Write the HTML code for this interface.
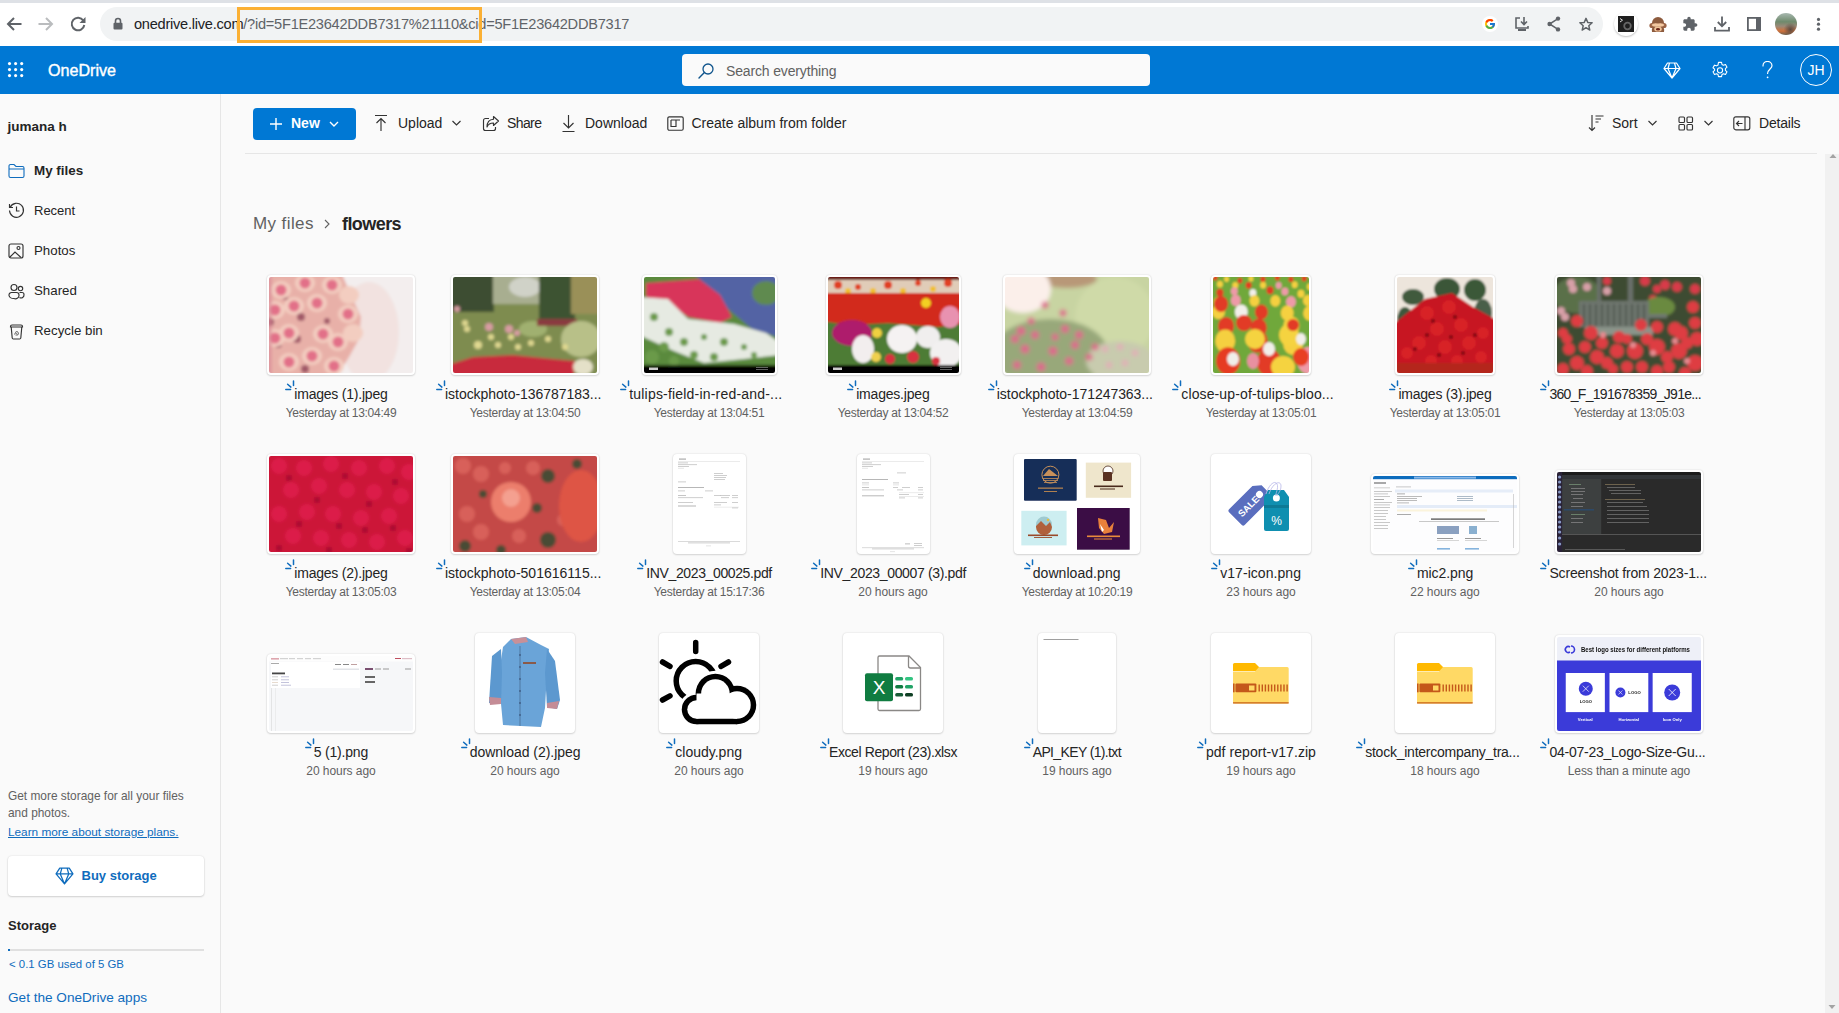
<!DOCTYPE html>
<html><head><meta charset="utf-8"><title>OneDrive</title>
<style>
*{box-sizing:border-box;margin:0;padding:0}
html,body{width:1839px;height:1013px;overflow:hidden;background:#fafafa;font-family:"Liberation Sans",sans-serif;color:#242424}
.a{position:absolute}
svg{display:block}
#chrome{left:0;top:0;width:1839px;height:46px;background:#fff}
#tabstrip{left:0;top:0;width:1839px;height:3px;background:#dee1e6}
#pill{left:100px;top:7px;width:1503px;height:34px;border-radius:17px;background:#f1f3f4}
#url{left:134px;top:15px;font-size:14.6px;letter-spacing:-0.25px;line-height:19px;color:#5f6368;white-space:nowrap}
#url b{font-weight:400;color:#202124}
#hl{left:237px;top:7px;width:245px;height:36px;border:3px solid #fbb034}
#hdr{left:0;top:46px;width:1839px;height:48px;background:#0078d4}
#brand{left:48px;top:60px;font-size:16.1px;font-weight:400;-webkit-text-stroke:0.4px #fff;color:#fff;line-height:20px}
#search{left:682px;top:54px;width:468px;height:32px;border-radius:4px;background:#fafafa}
#stext{left:726px;top:63px;font-size:14px;letter-spacing:-0.15px;line-height:17px;color:#616161}
#jh{left:1800px;top:54px;width:32px;height:32px;border-radius:50%;border:1px solid #fff;color:#fff;font-size:14px;line-height:30px;text-align:center}
#side{left:0;top:94px;width:221px;height:919px;background:#fafafa;border-right:1px solid #e6e6e6}
.nav{left:34px;font-size:13.4px;line-height:16px;color:#242424}
.navi{left:8px}
.tb{top:115px;font-size:14px;line-height:17px;color:#242424;white-space:nowrap}
#newbtn{left:253px;top:108px;width:103px;height:32px;border-radius:4px;background:#0078d4}
#sep{left:245px;top:153px;width:1572px;height:1px;background:#e6e6e6}
#crumb1{left:253px;top:213px;font-size:17px;letter-spacing:0.4px;line-height:22px;color:#616161}
#crumb2{left:342px;top:213px;font-size:18px;letter-spacing:-0.57px;line-height:22px;font-weight:700;color:#242424}
#sb{left:1825px;top:154px;width:14px;height:859px;background:#f1f1f1}
.card{position:absolute;background:#fff;border-radius:4px;box-shadow:0 0 2px rgba(0,0,0,.14),0 1px 2px rgba(0,0,0,.12);padding:2px;overflow:hidden}
.card>div{border-radius:2px;overflow:hidden;position:relative}
.nm{position:absolute;width:300px;text-align:center;font-size:14px;line-height:17px;color:#242424;white-space:nowrap}
.nt{position:relative;display:inline-block}
.sy{position:absolute;left:-9px;top:-6px}
.dt{position:absolute;width:300px;text-align:center;font-size:12px;line-height:15px;color:#616161;white-space:nowrap}
</style></head><body>
<!-- CHROME -->
<div id="chrome" class="a"></div>
<div id="tabstrip" class="a"></div>
<svg class="a" style="left:5px;top:15px" width="18" height="18" viewBox="0 0 18 18"><path d="M16.5 9H3.5M9 3L3 9L9 15" stroke="#5f6368" stroke-width="2" fill="none"/></svg>
<svg class="a" style="left:37px;top:15px" width="18" height="18" viewBox="0 0 18 18"><path d="M1.5 9H14.5M9 3L15 9L9 15" stroke="#babcbe" stroke-width="2" fill="none"/></svg>
<svg class="a" style="left:69px;top:15px" width="18" height="18" viewBox="0 0 18 18"><path d="M14.3 5.5A6.3 6.3 0 1 0 15.3 10" stroke="#5f6368" stroke-width="2" fill="none"/><path d="M16.5 2V8H10.5Z" fill="#5f6368"/></svg>
<div id="pill" class="a"></div>
<svg class="a" style="left:113px;top:17px" width="10" height="13" viewBox="0 0 10 13"><path d="M2.5 6V4A2.5 2.5 0 0 1 7.5 4V6" stroke="#5f6368" stroke-width="1.6" fill="none"/><rect x="0.5" y="5.8" width="9" height="6.6" rx="1" fill="#5f6368"/></svg>
<div id="url" class="a"><b>onedrive.live.com</b>/?id=5F1E23642DDB7317%21110&amp;cid=5F1E23642DDB7317</div>
<div id="hl" class="a"></div>
<!-- chrome right icons -->
<div class="a" style="left:1482px;top:16px;width:16px;height:16px;border-radius:50%;background:#fff"></div>
<svg class="a" style="left:1484px;top:18px" width="12" height="12" viewBox="0 0 48 48"><path d="M43.6 20.1H42V20H24v8h11.3C33.7 32.7 29.2 36 24 36c-6.6 0-12-5.4-12-12s5.4-12 12-12c3.1 0 5.8 1.2 7.9 3.1l5.7-5.7C34 6.1 29.3 4 24 4 13 4 4 13 4 24s9 20 20 20 20-9 20-20c0-1.3-.1-2.6-.4-3.9z" fill="#FFC107"/><path d="M6.3 14.7l6.6 4.8C14.7 15.1 19 12 24 12c3.1 0 5.8 1.2 7.9 3.1l5.7-5.7C34 6.1 29.3 4 24 4 16.3 4 9.7 8.3 6.3 14.7z" fill="#FF3D00"/><path d="M24 44c5.2 0 9.9-2 13.4-5.2l-6.2-5.2C29.2 35.1 26.7 36 24 36c-5.2 0-9.6-3.3-11.3-7.9l-6.5 5C9.5 39.6 16.2 44 24 44z" fill="#4CAF50"/><path d="M43.6 20.1H42V20H24v8h11.3c-.8 2.2-2.2 4.2-4.1 5.6l6.2 5.2C37 39.2 44 34 44 24c0-1.3-.1-2.6-.4-3.9z" fill="#1976D2"/></svg>
<svg class="a" style="left:1514px;top:16px" width="16" height="16" viewBox="0 0 16 16"><path d="M6 2H2V12H14V10" stroke="#5f6368" stroke-width="1.6" fill="none"/><path d="M10 1V8M7 5.5L10 8.5L13 5.5" stroke="#5f6368" stroke-width="1.6" fill="none"/><rect x="4" y="13" width="8" height="2" fill="#5f6368"/></svg>
<svg class="a" style="left:1547px;top:16px" width="14" height="16" viewBox="0 0 14 16"><circle cx="11" cy="2.6" r="2.2" fill="#5f6368"/><circle cx="2.6" cy="8" r="2.2" fill="#5f6368"/><circle cx="11" cy="13.4" r="2.2" fill="#5f6368"/><path d="M11 2.6L2.6 8L11 13.4" stroke="#5f6368" stroke-width="1.5" fill="none"/></svg>
<svg class="a" style="left:1578px;top:16px" width="16" height="16" viewBox="0 0 24 24"><path d="M12 3.5l2.6 6.1 6.6.6-5 4.4 1.5 6.5L12 17.6l-5.7 3.5 1.5-6.5-5-4.4 6.6-.6z" stroke="#5f6368" stroke-width="2.2" fill="none" stroke-linejoin="round"/></svg>
<div class="a" style="left:1614px;top:12px;width:24px;height:24px;border-radius:50%;background:#fff;box-shadow:0 1px 2px rgba(0,0,0,.25)"></div>
<div class="a" style="left:1618px;top:16px;width:16px;height:16px;background:#1f1f1f"></div>
<svg class="a" style="left:1618px;top:16px" width="16" height="16" viewBox="0 0 16 16"><path d="M2 2.5L4.5 4.2L2 6" stroke="#ddd" stroke-width="1" fill="none"/><circle cx="9.5" cy="10" r="3.3" stroke="#666" stroke-width="1.8" fill="none"/></svg>
<svg class="a" style="left:1649px;top:16px" width="18" height="17" viewBox="0 0 18 17"><ellipse cx="9" cy="7" rx="6" ry="6" fill="#8d5b3e"/><ellipse cx="3" cy="9.5" rx="2.6" ry="2.6" fill="#9a6244"/><ellipse cx="15" cy="9.5" rx="2.6" ry="2.6" fill="#9a6244"/><path d="M3 16 Q2 11 6 10 H12 Q16 11 15 16Z" fill="#8d5b3e"/><path d="M2.5 9 Q4 6.5 9 7.5 Q14 6.5 15.5 9 Q14 11.5 9 10.5 Q4 11.5 2.5 9Z" fill="#f2c7a0"/><ellipse cx="9" cy="13" rx="3.8" ry="2.6" fill="#f0c49a"/><ellipse cx="9" cy="13.3" rx="2" ry="1.3" fill="#6a2418"/></svg>
<svg class="a" style="left:1682px;top:16px" width="16" height="16" viewBox="0 0 24 24"><path d="M20.5 11H19V7c0-1.1-.9-2-2-2h-4V3.5C13 2.1 11.9 1 10.5 1S8 2.1 8 3.5V5H4c-1.1 0-2 .9-2 2v3.8h1.5c1.5 0 2.7 1.2 2.7 2.7S5 16.2 3.5 16.2H2V20c0 1.1.9 2 2 2h3.8v-1.5c0-1.5 1.2-2.7 2.7-2.7s2.7 1.2 2.7 2.7V22H17c1.1 0 2-.9 2-2v-4h1.5c1.4 0 2.5-1.1 2.5-2.5S21.9 11 20.5 11z" fill="#5f6368"/></svg>
<svg class="a" style="left:1714px;top:16px" width="16" height="16" viewBox="0 0 16 16"><path d="M8 0.5V10M3.8 6L8 10.2L12.2 6" stroke="#5f6368" stroke-width="1.8" fill="none"/><path d="M1 11V14.6H15V11" stroke="#5f6368" stroke-width="1.8" fill="none"/></svg>
<svg class="a" style="left:1746px;top:16px" width="16" height="16" viewBox="0 0 16 16"><rect x="1.9" y="1.9" width="12.2" height="12.2" stroke="#5f6368" stroke-width="1.8" fill="none"/><rect x="10" y="1.5" width="4.5" height="13" fill="#5f6368"/></svg>
<div class="a" style="left:1775px;top:13px;width:22px;height:22px;border-radius:50%;background:radial-gradient(circle at 70% 75%,#5a4a40 0,transparent 30%),linear-gradient(180deg,#a8b8b0 0%,#6f8a6c 40%,#9a8a78 60%,#d0703a 82%,#6a6050 100%)"></div>
<svg class="a" style="left:1815px;top:17px" width="7" height="15" viewBox="0 0 7 15"><circle cx="3.5" cy="2.4" r="1.6" fill="#5f6368"/><circle cx="3.5" cy="7.2" r="1.6" fill="#5f6368"/><circle cx="3.5" cy="12.2" r="1.6" fill="#5f6368"/></svg>

<!-- HEADER -->
<div id="hdr" class="a"></div>
<svg class="a" style="left:0;top:0" width="30" height="90" viewBox="0 0 30 90" fill="#fff"><circle cx="9.5" cy="63.6" r="1.55"/><circle cx="15.6" cy="63.6" r="1.55"/><circle cx="21.7" cy="63.6" r="1.55"/><circle cx="9.5" cy="69.6" r="1.55"/><circle cx="15.6" cy="69.6" r="1.55"/><circle cx="21.7" cy="69.6" r="1.55"/><circle cx="9.5" cy="75.6" r="1.55"/><circle cx="15.6" cy="75.6" r="1.55"/><circle cx="21.7" cy="75.6" r="1.55"/></svg>
<div id="brand" class="a">OneDrive</div>
<div id="search" class="a"></div>
<svg class="a" style="left:697px;top:62px" width="18" height="18" viewBox="0 0 18 18"><circle cx="11" cy="7" r="5" stroke="#0f548c" stroke-width="1.3" fill="none"/><path d="M7.4 10.6L2 16" stroke="#0f548c" stroke-width="1.4" stroke-linecap="round"/></svg>
<div id="stext" class="a">Search everything</div>
<svg class="a" style="left:1663px;top:62px" width="18" height="17" viewBox="0 0 18 17"><path d="M4.5 1H13.5L17 6.5L9 16L1 6.5Z M1 6.5H17 M6.5 1L5 6.5L9 16L13 6.5L11.5 1" stroke="#fff" stroke-width="1.2" fill="none" stroke-linejoin="round"/></svg>
<svg class="a" style="left:1711px;top:61px" width="18" height="18" viewBox="0 0 20 20"><path d="M8.3 1.5h3.4l.5 2.4 1.6.9 2.3-.8 1.7 2.9-1.8 1.6v1.9l1.8 1.6-1.7 2.9-2.3-.8-1.6.9-.5 2.4H8.3l-.5-2.4-1.6-.9-2.3.8-1.7-2.9 1.8-1.6V9.1L2.2 7.5l1.7-2.9 2.3.8 1.6-.9z" stroke="#fff" stroke-width="1.2" fill="none" stroke-linejoin="round"/><circle cx="10" cy="10.4" r="2.9" stroke="#fff" stroke-width="1.2" fill="none"/></svg>
<svg class="a" style="left:1761px;top:61px" width="13" height="18" viewBox="0 0 13 18"><path d="M2 5A4.5 4.5 0 0 1 11 4.8C11 7.8 6.6 8.5 6.6 12.5" stroke="#fff" stroke-width="1.2" fill="none" stroke-linecap="round"/><circle cx="6.6" cy="16.3" r="0.9" fill="#fff"/></svg>
<div id="jh" class="a">JH</div>

<!-- SIDEBAR -->
<div id="side" class="a"></div>
<div class="a" style="left:7.5px;top:119px;font-size:13.5px;font-weight:700;line-height:16px">jumana h</div>
<svg class="a navi" style="top:163px" width="17" height="16" viewBox="0 0 17 16"><path d="M1 3A1.5 1.5 0 0 1 2.5 1.5H6L8 3.5H14.5A1.5 1.5 0 0 1 16 5V13A1.5 1.5 0 0 1 14.5 14.5H2.5A1.5 1.5 0 0 1 1 13Z M1 6H16" stroke="#0f6cbd" stroke-width="1.1" fill="none"/></svg>
<div class="a nav" style="top:163px;font-weight:700;font-size:13.4px">My files</div>
<svg class="a navi" style="top:202px" width="17" height="17" viewBox="0 0 17 17"><path d="M2.2 5.2A7 7 0 1 1 1.5 8.5" stroke="#333" stroke-width="1.15" fill="none"/><path d="M1.5 2V5.5H5" stroke="#333" stroke-width="1.15" fill="none"/><path d="M8.5 4.5V9H11.5" stroke="#333" stroke-width="1.15" fill="none"/></svg>
<div class="a nav" style="top:203px;font-size:13px">Recent</div>
<svg class="a navi" style="top:243px" width="16" height="16" viewBox="0 0 16 16"><rect x="1" y="1" width="14" height="14" rx="2" stroke="#333" stroke-width="1.15" fill="none"/><path d="M1.5 14.5L7 9L13 14.5" stroke="#333" stroke-width="1.15" fill="none"/><circle cx="10.5" cy="5" r="1.5" stroke="#333" stroke-width="1.15" fill="none"/></svg>
<div class="a nav" style="top:243px;font-size:13.3px">Photos</div>
<svg class="a navi" style="top:283px" width="17" height="17" viewBox="0 0 17 17"><circle cx="6" cy="4.5" r="3" stroke="#333" stroke-width="1.15" fill="none"/><circle cx="12.5" cy="5.5" r="2.2" stroke="#333" stroke-width="1.15" fill="none"/><path d="M1 12A2.5 2.5 0 0 1 3.5 9.5H8.5A2.5 2.5 0 0 1 11 12V12.5A3.5 3.5 0 0 1 6 15.5A5 3.5 0 0 1 1 12.5Z M11.5 9.5H14A2 2 0 0 1 16 11.5A3 3 0 0 1 11.5 14.5" stroke="#333" stroke-width="1.15" fill="none"/></svg>
<div class="a nav" style="top:283px;font-size:13.3px">Shared</div>
<svg class="a navi" style="top:323px" width="17" height="17" viewBox="0 0 17 17"><path d="M2.5 3.5A1.5 1.5 0 0 1 4 2H13A1.5 1.5 0 0 1 14.5 3.5V4H2.5Z M3.2 4L4.2 15A1.2 1.2 0 0 0 5.4 16H11.6A1.2 1.2 0 0 0 12.8 15L13.8 4" stroke="#333" stroke-width="1.15" fill="none"/><path d="M6.5 11.5L7.5 9.5L8.8 11.2M10.5 10L9.8 12H7.5M7.8 8.7H9.6L10.3 10" stroke="#424242" stroke-width="0.8" fill="none"/></svg>
<div class="a nav" style="top:323px;font-size:13.3px">Recycle bin</div>

<div class="a" style="left:8px;top:788px;font-size:11.9px;line-height:17px;color:#616161;width:200px;white-space:nowrap">Get more storage for all your files<br>and photos.</div>
<div class="a" style="left:8px;top:824px;font-size:11.8px;line-height:16px;color:#0f6cbd;text-decoration:underline;white-space:nowrap">Learn more about storage plans.</div>
<div class="a" style="left:8px;top:856px;width:196px;height:40px;border-radius:4px;background:#fff;box-shadow:0 0 2px rgba(0,0,0,.12),0 1px 2px rgba(0,0,0,.14)"></div>
<svg class="a" style="left:55px;top:867px" width="19" height="18" viewBox="0 0 18 17"><path d="M4.5 1H13.5L17 6.5L9 16L1 6.5Z M1 6.5H17 M6.5 1L5 6.5L9 16L13 6.5L11.5 1" stroke="#0f6cbd" stroke-width="1.2" fill="none" stroke-linejoin="round"/></svg>
<div class="a" style="left:81.5px;top:868px;font-size:13px;font-weight:700;line-height:16px;color:#0f6cbd">Buy storage</div>
<div class="a" style="left:8px;top:918px;font-size:13px;font-weight:700;line-height:16px;color:#242424">Storage</div>
<div class="a" style="left:8px;top:949px;width:196px;height:2px;background:#e0e0e0"></div>
<div class="a" style="left:8px;top:949px;width:2px;height:2px;background:#0f6cbd"></div>
<div class="a" style="left:9px;top:957px;font-size:11.4px;line-height:14px;color:#0f6cbd;white-space:nowrap">&lt; 0.1 GB used of 5 GB</div>
<div class="a" style="left:8px;top:989px;font-size:13.6px;line-height:17px;color:#0f6cbd;white-space:nowrap">Get the OneDrive apps</div>

<!-- TOOLBAR -->
<div id="newbtn" class="a"></div>
<svg class="a" style="left:268px;top:116px" width="16" height="16" viewBox="0 0 16 16"><path d="M8 2V14M2 8H14" stroke="#fff" stroke-width="1.4"/></svg>
<div class="a tb" style="left:291px;color:#fff;font-weight:700">New</div>
<svg class="a" style="left:328px;top:119px" width="12" height="10" viewBox="0 0 12 10"><path d="M2 3L6 7L10 3" stroke="#fff" stroke-width="1.4" fill="none"/></svg>

<svg class="a" style="left:373px;top:114px" width="16" height="18" viewBox="0 0 16 18"><path d="M2 1.5H14M8 4.5V17M3.5 9L8 4.5L12.5 9" stroke="#333" stroke-width="1.15" fill="none"/></svg>
<div class="a tb" style="left:398px">Upload</div>
<svg class="a" style="left:451px;top:119px" width="11" height="8" viewBox="0 0 11 8"><path d="M1.5 2L5.5 6L9.5 2" stroke="#333" stroke-width="1.15" fill="none"/></svg>

<svg class="a" style="left:482px;top:115px" width="18" height="17" viewBox="0 0 18 17"><path d="M7 3.5H3.5A2 2 0 0 0 1.5 5.5V13.5A2 2 0 0 0 3.5 15.5H11.5A2 2 0 0 0 13.5 13.5V12" stroke="#333" stroke-width="1.15" fill="none"/><path d="M11.5 1.5L16.5 6L11.5 10.5V8C8 8 6 9.5 5 12C5 8 7 4.5 11.5 4.2Z" stroke="#333" stroke-width="1.15" fill="none" stroke-linejoin="round"/></svg>
<div class="a tb" style="left:507px;letter-spacing:-0.6px">Share</div>

<svg class="a" style="left:561px;top:114px" width="15" height="19" viewBox="0 0 15 19"><path d="M7.5 1V14M2.5 9L7.5 14L12.5 9M1.5 17.5H13.5" stroke="#333" stroke-width="1.15" fill="none"/></svg>
<div class="a tb" style="left:585px">Download</div>

<svg class="a" style="left:667px;top:116px" width="17" height="15" viewBox="0 0 17 15"><rect x="0.8" y="0.8" width="15.4" height="13.4" rx="1.5" stroke="#333" stroke-width="1.15" fill="none"/><path d="M4 4H13M4 4V10.5H9V4" stroke="#333" stroke-width="1.15" fill="none"/></svg>
<div class="a tb" style="left:691.5px">Create album from folder</div>

<svg class="a" style="left:1588px;top:114px" width="17" height="18" viewBox="0 0 17 18"><path d="M4 1V16.5M1 13.5L4 16.5L7 13.5M7.5 2H15.5M7.5 5H13M7.5 8H10.5" stroke="#333" stroke-width="1.15" fill="none"/></svg>
<div class="a tb" style="left:1612px">Sort</div>
<svg class="a" style="left:1647px;top:119px" width="11" height="8" viewBox="0 0 11 8"><path d="M1.5 2L5.5 6L9.5 2" stroke="#333" stroke-width="1.15" fill="none"/></svg>
<svg class="a" style="left:1678px;top:116px" width="16" height="15" viewBox="0 0 16 15"><rect x="1" y="1" width="5.5" height="5.5" rx="1" stroke="#333" stroke-width="1.15" fill="none"/><rect x="9" y="1" width="5.5" height="5.5" rx="1" stroke="#333" stroke-width="1.15" fill="none"/><rect x="1" y="8.5" width="5.5" height="5.5" rx="1" stroke="#333" stroke-width="1.15" fill="none"/><rect x="9" y="8.5" width="5.5" height="5.5" rx="1" stroke="#333" stroke-width="1.15" fill="none"/></svg>
<svg class="a" style="left:1703px;top:119px" width="11" height="8" viewBox="0 0 11 8"><path d="M1.5 2L5.5 6L9.5 2" stroke="#333" stroke-width="1.15" fill="none"/></svg>
<svg class="a" style="left:1733px;top:116px" width="18" height="15" viewBox="0 0 18 15"><rect x="0.8" y="0.8" width="16" height="13" rx="2" stroke="#333" stroke-width="1.15" fill="none"/><path d="M12 1V14M9.5 7.5H3.5M6 5L3.5 7.5L6 10" stroke="#333" stroke-width="1.15" fill="none"/></svg>
<div class="a tb" style="left:1759px;letter-spacing:-0.2px">Details</div>
<div id="sep" class="a"></div>

<div id="crumb1" class="a">My files</div>
<svg class="a" style="left:322px;top:217px" width="10" height="14" viewBox="0 0 10 14"><path d="M3 3L7 7L3 11" stroke="#616161" stroke-width="1.1" fill="none"/></svg>
<div id="crumb2" class="a">flowers</div>

<div class="card" style="left:267.0px;top:275px;width:148px;height:100px"><div style="position:absolute;left:2px;top:2px;width:144px;height:96px;overflow:hidden;border-radius:2px"><svg width="144" height="96" viewBox="0 0 144 96" style="position:absolute;left:0;top:0"><defs><filter id="b0" x="-10%" y="-10%" width="120%" height="120%"><feGaussianBlur stdDeviation="1.8"/></filter></defs><g filter="url(#b0)"><rect x="-5" y="-5" width="160" height="110" fill="#f3eeee"/><ellipse cx="100" cy="55" rx="30" ry="50" fill="#f2e2e0"/><path d="M-5 -5 H72 L82 18 L92 40 L90 62 L80 80 L70 96 L62 105 H-5Z" fill="#e8b0a8"/><circle cx="32" cy="40" r="4" fill="#a05868"/><circle cx="1" cy="45" r="4" fill="#a05868"/><circle cx="9" cy="67" r="4" fill="#a05868"/><circle cx="28" cy="62" r="4" fill="#a05868"/><circle cx="36" cy="92" r="4" fill="#a05868"/><circle cx="58" cy="44" r="3" fill="#a05868"/><circle cx="16" cy="20" r="3" fill="#a05868"/><ellipse cx="12" cy="13" rx="10" ry="9" fill="#f3cdc0"/><ellipse cx="36" cy="6" rx="10" ry="9" fill="#f3cdc0"/><ellipse cx="48" cy="26" rx="10" ry="9" fill="#f3cdc0"/><ellipse cx="25" cy="29" rx="10" ry="9" fill="#f3cdc0"/><ellipse cx="79" cy="37" rx="10" ry="9" fill="#f3cdc0"/><ellipse cx="6" cy="33" rx="10" ry="9" fill="#f3cdc0"/><ellipse cx="20" cy="56" rx="10" ry="9" fill="#f3cdc0"/><ellipse cx="54" cy="57" rx="10" ry="9" fill="#f3cdc0"/><ellipse cx="69" cy="65" rx="10" ry="9" fill="#f3cdc0"/><ellipse cx="6" cy="61" rx="10" ry="9" fill="#f3cdc0"/><ellipse cx="43" cy="79" rx="10" ry="9" fill="#f3cdc0"/><ellipse cx="65" cy="89" rx="10" ry="9" fill="#f3cdc0"/><ellipse cx="20" cy="85" rx="10" ry="9" fill="#f3cdc0"/><ellipse cx="63" cy="8" rx="10" ry="9" fill="#f3cdc0"/><ellipse cx="80" cy="18" rx="10" ry="9" fill="#f3cdc0"/><ellipse cx="84" cy="56" rx="10" ry="9" fill="#f3cdc0"/><circle cx="12" cy="13" r="5.5" fill="#e27088"/><circle cx="36" cy="6" r="5.5" fill="#e27088"/><circle cx="48" cy="26" r="5.5" fill="#e27088"/><circle cx="25" cy="29" r="5.5" fill="#e27088"/><circle cx="79" cy="37" r="5.5" fill="#e27088"/><circle cx="6" cy="33" r="5.5" fill="#e27088"/><circle cx="20" cy="56" r="5.5" fill="#e27088"/><circle cx="54" cy="57" r="5.5" fill="#e27088"/><circle cx="69" cy="65" r="5.5" fill="#e27088"/><circle cx="6" cy="61" r="5.5" fill="#e27088"/><circle cx="43" cy="79" r="5.5" fill="#e27088"/><circle cx="65" cy="89" r="5.5" fill="#e27088"/><circle cx="20" cy="85" r="5.5" fill="#e27088"/><circle cx="63" cy="8" r="5.5" fill="#e27088"/><rect x="-5" y="-5" width="8" height="110" fill="#d88898" opacity="0.6"/></g></svg></div></div>
<div class="nm" style="left:190.95000000000005px;top:386px;letter-spacing:-0.213px"><span class="nt" id="n0"><svg class="sy" width="12" height="12" viewBox="0 0 12 12"><path d="M0.8 9.5H5.6M2.6 4.3L5.9 7.1M8.5 1V5.6" stroke="#0f6cbd" stroke-width="1.5" fill="none" stroke-linecap="round"/></svg>images (1).jpeg</span></div>
<div class="dt" style="left:191px;top:406px;letter-spacing:-0.273px"><span id="d0">Yesterday at 13:04:49</span></div>
<div class="card" style="left:451.0px;top:275px;width:148px;height:100px"><div style="position:absolute;left:2px;top:2px;width:144px;height:96px;overflow:hidden;border-radius:2px"><svg width="144" height="96" viewBox="0 0 144 96" style="position:absolute;left:0;top:0"><defs><filter id="b1" x="-10%" y="-10%" width="120%" height="120%"><feGaussianBlur stdDeviation="1.8"/></filter></defs><g filter="url(#b1)"><rect x="-5" y="-5" width="160" height="110" fill="#7e8c50"/><rect x="-5" y="-5" width="46" height="40" fill="#3e4e32"/><rect x="40" y="-5" width="50" height="32" fill="#a8ae90"/><ellipse cx="72" cy="10" rx="16" ry="10" fill="#d0d2c8"/><rect x="86" y="-5" width="36" height="52" fill="#3e5232"/><rect x="118" y="-5" width="30" height="42" fill="#9a9058"/><ellipse cx="80" cy="52" rx="14" ry="8" fill="#a0b070"/><rect x="84" y="42" width="40" height="7" fill="#8a3a40"/><ellipse cx="128" cy="62" rx="20" ry="18" fill="#b8c088"/><circle cx="12" cy="46" r="3" fill="#e0d890"/><circle cx="14" cy="52" r="3" fill="#e0d890"/><circle cx="38" cy="60" r="3" fill="#e0d890"/><circle cx="58" cy="60" r="3" fill="#e0d890"/><circle cx="78" cy="66" r="3" fill="#e0d890"/><circle cx="95" cy="62" r="3" fill="#e0d890"/><circle cx="112" cy="70" r="3" fill="#e0d890"/><circle cx="25" cy="68" r="4" fill="#e0d890"/><circle cx="45" cy="68" r="3" fill="#e0d890"/><circle cx="65" cy="70" r="3" fill="#e0d890"/><circle cx="36" cy="50" r="4" fill="#d89ca2"/><circle cx="56" cy="52" r="4" fill="#d89ca2"/><circle cx="64" cy="56" r="3" fill="#d89ca2"/><circle cx="4" cy="32" r="3" fill="#d89ca2"/><path d="M-5 88 L20 80 L60 78 L100 82 L122 84 L120 105 H-5Z" fill="#c82c3c"/><ellipse cx="130" cy="90" rx="10" ry="8" fill="#e4e0c8"/></g></svg></div></div>
<div class="nm" style="left:373.20000000000005px;top:386px;letter-spacing:-0.035px"><span class="nt" id="n1"><svg class="sy" width="12" height="12" viewBox="0 0 12 12"><path d="M0.8 9.5H5.6M2.6 4.3L5.9 7.1M8.5 1V5.6" stroke="#0f6cbd" stroke-width="1.5" fill="none" stroke-linecap="round"/></svg>istockphoto-136787183...</span></div>
<div class="dt" style="left:375px;top:406px;letter-spacing:-0.273px"><span id="d1">Yesterday at 13:04:50</span></div>
<div class="card" style="left:641.5px;top:275px;width:135px;height:100px"><div style="position:absolute;left:2px;top:2px;width:131px;height:96px;overflow:hidden;border-radius:2px"><svg width="131" height="96" viewBox="0 0 131 96" style="position:absolute;left:0;top:0"><defs><filter id="b2" x="-10%" y="-10%" width="120%" height="120%"><feGaussianBlur stdDeviation="1.5"/></filter></defs><g filter="url(#b2)"><rect x="-5" y="-5" width="145" height="110" fill="#5a8a3e"/><path d="M48 -5 H140 V62 L108 52 L82 30 L62 8Z" fill="#5264a4"/><ellipse cx="122" cy="16" rx="14" ry="12" fill="#5e8a50"/><path d="M2 6 L55 2 L76 18 L88 40 L76 46 L44 40 L24 26 L2 20Z" fill="#d8345a"/><path d="M-5 20 L24 22 L44 42 L90 47 L122 56 L136 66 L136 78 L100 82 L60 86 L30 74 L-5 58Z" fill="#e6eae2"/><circle cx="10" cy="40" r="4" fill="#6a9a4a"/><circle cx="25" cy="55" r="4" fill="#6a9a4a"/><circle cx="40" cy="65" r="4" fill="#6a9a4a"/><circle cx="60" cy="60" r="3" fill="#6a9a4a"/><circle cx="80" cy="65" r="4" fill="#6a9a4a"/><circle cx="100" cy="70" r="3" fill="#6a9a4a"/><circle cx="20" cy="70" r="5" fill="#6a9a4a"/><circle cx="50" cy="78" r="4" fill="#6a9a4a"/><circle cx="70" cy="80" r="4" fill="#6a9a4a"/><circle cx="110" cy="78" r="3" fill="#6a9a4a"/><circle cx="8" cy="80" r="7" fill="#6a9a4a"/><circle cx="30" cy="84" r="5" fill="#6a9a4a"/><rect x="-5" y="88" width="145" height="20" fill="#050505"/></g><rect x="5" y="90.5" width="9" height="2.5" fill="#ccc"/><rect x="112" y="90" width="12" height="0.8" fill="#777"/><rect x="112" y="92" width="12" height="0.8" fill="#777"/></svg></div></div>
<div class="nm" style="left:555.8px;top:386px;letter-spacing:0.198px"><span class="nt" id="n2"><svg class="sy" width="12" height="12" viewBox="0 0 12 12"><path d="M0.8 9.5H5.6M2.6 4.3L5.9 7.1M8.5 1V5.6" stroke="#0f6cbd" stroke-width="1.5" fill="none" stroke-linecap="round"/></svg>tulips-field-in-red-and-...</span></div>
<div class="dt" style="left:559px;top:406px;letter-spacing:-0.273px"><span id="d2">Yesterday at 13:04:51</span></div>
<div class="card" style="left:825.5px;top:275px;width:135px;height:100px"><div style="position:absolute;left:2px;top:2px;width:131px;height:96px;overflow:hidden;border-radius:2px"><svg width="131" height="96" viewBox="0 0 131 96" style="position:absolute;left:0;top:0"><defs><filter id="b3" x="-10%" y="-10%" width="120%" height="120%"><feGaussianBlur stdDeviation="1.3"/></filter></defs><g filter="url(#b3)"><rect x="-5" y="-5" width="145" height="110" fill="#4e7c34"/><rect x="-5" y="-5" width="145" height="8" fill="#6a1a12"/><rect x="-5" y="3" width="145" height="15" fill="#e0ccb8"/><circle cx="10" cy="8" r="4" fill="#e04020"/><circle cx="30" cy="10" r="3" fill="#e04020"/><circle cx="60" cy="8" r="4" fill="#e04020"/><circle cx="90" cy="6" r="3" fill="#e04020"/><circle cx="120" cy="6" r="4" fill="#e04020"/><circle cx="20" cy="14" r="3" fill="#f0c030"/><circle cx="45" cy="14" r="3" fill="#f0c030"/><circle cx="75" cy="14" r="3" fill="#f0c030"/><circle cx="105" cy="12" r="3" fill="#f0c030"/><path d="M-5 16 H140 V46 L110 50 L60 46 L20 48 L-5 44Z" fill="#d22a1a"/><circle cx="98" cy="26" r="5" fill="#f3d020"/><ellipse cx="122" cy="40" rx="10" ry="11" fill="#e892b0"/><ellipse cx="24" cy="56" rx="20" ry="13" fill="#ae1a6c"/><ellipse cx="35" cy="72" rx="11" ry="14" fill="#f2eeee"/><circle cx="49" cy="56" r="5" fill="#f0d040"/><ellipse cx="74" cy="62" rx="15" ry="14" fill="#f5f2f2"/><ellipse cx="100" cy="60" rx="12" ry="11" fill="#f0eeee"/><ellipse cx="118" cy="76" rx="16" ry="14" fill="#f2f0f0"/><circle cx="85" cy="80" r="6" fill="#d83040"/><circle cx="62" cy="82" r="5" fill="#d83040"/><circle cx="108" cy="84" r="4" fill="#d83040"/><circle cx="48" cy="80" r="5" fill="#f0d050"/><rect x="-5" y="88" width="145" height="20" fill="#050505"/></g><rect x="5" y="90.5" width="9" height="2.5" fill="#ccc"/><rect x="112" y="90" width="12" height="0.8" fill="#777"/><rect x="112" y="92" width="12" height="0.8" fill="#777"/></svg></div></div>
<div class="nm" style="left:742.85px;top:386px;letter-spacing:-0.200px"><span class="nt" id="n3"><svg class="sy" width="12" height="12" viewBox="0 0 12 12"><path d="M0.8 9.5H5.6M2.6 4.3L5.9 7.1M8.5 1V5.6" stroke="#0f6cbd" stroke-width="1.5" fill="none" stroke-linecap="round"/></svg>images.jpeg</span></div>
<div class="dt" style="left:743px;top:406px;letter-spacing:-0.273px"><span id="d3">Yesterday at 13:04:52</span></div>
<div class="card" style="left:1003.0px;top:275px;width:148px;height:100px"><div style="position:absolute;left:2px;top:2px;width:144px;height:96px;overflow:hidden;border-radius:2px"><svg width="144" height="96" viewBox="0 0 144 96" style="position:absolute;left:0;top:0"><defs><filter id="b4" x="-10%" y="-10%" width="120%" height="120%"><feGaussianBlur stdDeviation="2"/></filter></defs><g filter="url(#b4)"><rect x="-5" y="-5" width="160" height="110" fill="#c8d4a2"/><ellipse cx="62" cy="2" rx="30" ry="9" fill="#b89878"/><ellipse cx="18" cy="12" rx="28" ry="24" fill="#fbefea"/><ellipse cx="110" cy="40" rx="40" ry="40" fill="#cfdaa8"/><ellipse cx="45" cy="76" rx="58" ry="34" fill="#98a87a"/><ellipse cx="115" cy="84" rx="34" ry="20" fill="#c8cbae"/><circle cx="40" cy="28" r="3.5" fill="#dc6a8c"/><circle cx="58" cy="36" r="3.5" fill="#dc6a8c"/><circle cx="16" cy="54" r="4.5" fill="#dc6a8c"/><circle cx="30" cy="58" r="4" fill="#dc6a8c"/><circle cx="60" cy="52" r="4" fill="#dc6a8c"/><circle cx="74" cy="58" r="4" fill="#dc6a8c"/><circle cx="20" cy="72" r="4.5" fill="#dc6a8c"/><circle cx="48" cy="74" r="4.5" fill="#dc6a8c"/><circle cx="36" cy="90" r="4.5" fill="#dc6a8c"/><circle cx="70" cy="68" r="4" fill="#dc6a8c"/><circle cx="90" cy="70" r="3.5" fill="#dc6a8c"/><circle cx="10" cy="62" r="4" fill="#dc6a8c"/><circle cx="26" cy="44" r="3.5" fill="#dc6a8c"/><circle cx="50" cy="60" r="3.5" fill="#dc6a8c"/><circle cx="64" cy="84" r="4" fill="#dc6a8c"/><circle cx="84" cy="80" r="3.5" fill="#dc6a8c"/><circle cx="12" cy="88" r="4" fill="#dc6a8c"/><circle cx="100" cy="72" r="3" fill="#e4aab8"/><circle cx="115" cy="70" r="3" fill="#e4aab8"/><circle cx="130" cy="76" r="3" fill="#e4aab8"/><circle cx="120" cy="86" r="3" fill="#e4aab8"/><circle cx="104" cy="88" r="3" fill="#e4aab8"/></g></svg></div></div>
<div class="nm" style="left:924.8499999999999px;top:386px;letter-spacing:-0.047px"><span class="nt" id="n4"><svg class="sy" width="12" height="12" viewBox="0 0 12 12"><path d="M0.8 9.5H5.6M2.6 4.3L5.9 7.1M8.5 1V5.6" stroke="#0f6cbd" stroke-width="1.5" fill="none" stroke-linecap="round"/></svg>istockphoto-171247363...</span></div>
<div class="dt" style="left:927px;top:406px;letter-spacing:-0.273px"><span id="d4">Yesterday at 13:04:59</span></div>
<div class="card" style="left:1211.0px;top:275px;width:100px;height:100px"><div style="position:absolute;left:2px;top:2px;width:96px;height:96px;overflow:hidden;border-radius:2px"><svg width="96" height="96" viewBox="0 0 96 96" style="position:absolute;left:0;top:0"><defs><filter id="b5" x="-10%" y="-10%" width="120%" height="120%"><feGaussianBlur stdDeviation="1.0"/></filter></defs><g filter="url(#b5)"><rect x="-5" y="-5" width="110" height="110" fill="#6fa83a"/><ellipse cx="2.2" cy="0.6" rx="2.5" ry="2.9" fill="#e63a22"/><ellipse cx="13.5" cy="2.1" rx="2.5" ry="2.9" fill="#f5d040"/><ellipse cx="26.9" cy="3.6" rx="2.5" ry="2.9" fill="#e63a22"/><ellipse cx="38.0" cy="1.7" rx="2.5" ry="2.9" fill="#f5d040"/><ellipse cx="49.9" cy="2.2" rx="2.5" ry="2.9" fill="#e63a22"/><ellipse cx="64.3" cy="0.5" rx="2.5" ry="2.9" fill="#e63a22"/><ellipse cx="77.9" cy="2.3" rx="2.5" ry="2.9" fill="#e63a22"/><ellipse cx="91.2" cy="1.6" rx="2.5" ry="2.9" fill="#e63a22"/><ellipse cx="6.9" cy="7.2" rx="3.0" ry="3.4" fill="#f5d040"/><ellipse cx="22.3" cy="8.3" rx="3.0" ry="3.4" fill="#f5d040"/><ellipse cx="35.6" cy="8.3" rx="3.0" ry="3.4" fill="#e63a22"/><ellipse cx="50.1" cy="8.2" rx="3.0" ry="3.4" fill="#f5d040"/><ellipse cx="65.7" cy="8.5" rx="3.0" ry="3.4" fill="#ee9aa8"/><ellipse cx="81.7" cy="7.7" rx="3.0" ry="3.4" fill="#f5d040"/><ellipse cx="96.8" cy="9.7" rx="3.0" ry="3.4" fill="#f5d040"/><ellipse cx="6.9" cy="15.8" rx="3.5" ry="4.0" fill="#e63a22"/><ellipse cx="21.3" cy="14.2" rx="3.5" ry="4.0" fill="#ee9aa8"/><ellipse cx="39.9" cy="15.9" rx="3.5" ry="4.0" fill="#f2efea"/><ellipse cx="57.0" cy="13.3" rx="3.5" ry="4.0" fill="#e23a26"/><ellipse cx="71.9" cy="14.4" rx="3.5" ry="4.0" fill="#ee9aa8"/><ellipse cx="88.0" cy="16.8" rx="3.5" ry="4.0" fill="#f5d040"/><ellipse cx="5.5" cy="25.5" rx="5.0" ry="5.8" fill="#f5d040"/><ellipse cx="22.8" cy="23.4" rx="5.0" ry="5.8" fill="#ee9aa8"/><ellipse cx="41.5" cy="23.8" rx="5.0" ry="5.8" fill="#f5d040"/><ellipse cx="62.3" cy="23.9" rx="5.0" ry="5.8" fill="#f5d040"/><ellipse cx="78.0" cy="24.8" rx="5.0" ry="5.8" fill="#ee9aa8"/><ellipse cx="95.0" cy="23.5" rx="5.0" ry="5.8" fill="#f5d040"/><ellipse cx="5.5" cy="34.7" rx="6.5" ry="7.5" fill="#f5d040"/><ellipse cx="28.3" cy="34.9" rx="6.5" ry="7.5" fill="#f2efea"/><ellipse cx="48.4" cy="35.0" rx="6.5" ry="7.5" fill="#e23a26"/><ellipse cx="74.2" cy="36.0" rx="6.5" ry="7.5" fill="#f5d040"/><ellipse cx="96.7" cy="36.2" rx="6.5" ry="7.5" fill="#f5d040"/><ellipse cx="13.0" cy="49.1" rx="8.0" ry="9.2" fill="#e23a26"/><ellipse cx="45.8" cy="50.7" rx="8.0" ry="9.2" fill="#e23a26"/><ellipse cx="78.5" cy="48.6" rx="8.0" ry="9.2" fill="#f5d040"/><ellipse cx="12.2" cy="64.0" rx="10.0" ry="11.5" fill="#f5d040"/><ellipse cx="44.6" cy="64.0" rx="10.0" ry="11.5" fill="#e23a26"/><ellipse cx="80.1" cy="66.4" rx="10.0" ry="11.5" fill="#f5d040"/><ellipse cx="15.1" cy="84.1" rx="12.0" ry="13.8" fill="#e63a22"/><ellipse cx="56.0" cy="85.5" rx="12.0" ry="13.8" fill="#e23a26"/><ellipse cx="96.1" cy="83.6" rx="12.0" ry="13.8" fill="#ee9aa8"/><ellipse cx="70" cy="90" rx="12" ry="11" fill="#f5d340"/><ellipse cx="76" cy="58" rx="10" ry="11" fill="#f5d340"/><ellipse cx="42" cy="62" rx="10" ry="10" fill="#f5d340"/><ellipse cx="31" cy="46" rx="8" ry="8" fill="#e23a26"/><ellipse cx="8" cy="27" rx="7" ry="8" fill="#e23a26"/><ellipse cx="88" cy="80" rx="8" ry="9" fill="#e84020"/><ellipse cx="80" cy="48" rx="6" ry="6" fill="#e23a26"/><ellipse cx="56" cy="72" rx="6" ry="7" fill="#f2efea"/><ellipse cx="20" cy="82" rx="6" ry="7" fill="#f0eeea"/><ellipse cx="88" cy="62" rx="5" ry="6" fill="#f2efea"/><ellipse cx="40" cy="84" rx="6" ry="8" fill="#e890a0"/></g></svg></div></div>
<div class="nm" style="left:1107.6px;top:386px;letter-spacing:0.123px"><span class="nt" id="n5"><svg class="sy" width="12" height="12" viewBox="0 0 12 12"><path d="M0.8 9.5H5.6M2.6 4.3L5.9 7.1M8.5 1V5.6" stroke="#0f6cbd" stroke-width="1.5" fill="none" stroke-linecap="round"/></svg>close-up-of-tulips-bloo...</span></div>
<div class="dt" style="left:1111px;top:406px;letter-spacing:-0.273px"><span id="d5">Yesterday at 13:05:01</span></div>
<div class="card" style="left:1395.0px;top:275px;width:100px;height:100px"><div style="position:absolute;left:2px;top:2px;width:96px;height:96px;overflow:hidden;border-radius:2px"><svg width="96" height="96" viewBox="0 0 96 96" style="position:absolute;left:0;top:0"><defs><filter id="b6" x="-10%" y="-10%" width="120%" height="120%"><feGaussianBlur stdDeviation="1.3"/></filter></defs><g filter="url(#b6)"><rect x="-5" y="-5" width="110" height="110" fill="#ede5dc"/><ellipse cx="16" cy="20" rx="11" ry="8" fill="#3f5a3e"/><ellipse cx="50" cy="12" rx="13" ry="11" fill="#3b5638"/><ellipse cx="78" cy="13" rx="11" ry="11" fill="#3a5838"/><ellipse cx="86" cy="36" rx="9" ry="14" fill="#485e48"/><ellipse cx="8" cy="44" rx="8" ry="14" fill="#3e583c"/><path d="M-5 48 L28 22 L55 16 L76 30 L105 46 V105 H-5Z" fill="#c71620"/><circle cx="30" cy="36" r="7" fill="#d82028"/><circle cx="52" cy="30" r="7" fill="#d82028"/><circle cx="40" cy="52" r="7" fill="#d82028"/><circle cx="64" cy="48" r="7" fill="#d82028"/><circle cx="22" cy="66" r="7" fill="#d82028"/><circle cx="48" cy="70" r="7" fill="#d82028"/><circle cx="72" cy="66" r="7" fill="#d82028"/><circle cx="86" cy="56" r="6" fill="#d82028"/><circle cx="10" cy="76" r="6" fill="#d82028"/><circle cx="34" cy="84" r="6" fill="#d82028"/><circle cx="60" cy="84" r="6" fill="#d82028"/><circle cx="84" cy="80" r="6" fill="#d82028"/><circle cx="36" cy="44" r="2" fill="#7a0a10"/><circle cx="58" cy="40" r="2" fill="#7a0a10"/><circle cx="30" cy="58" r="2" fill="#7a0a10"/><circle cx="54" cy="60" r="2" fill="#7a0a10"/><circle cx="78" cy="58" r="2" fill="#7a0a10"/><circle cx="18" cy="72" r="2" fill="#7a0a10"/><circle cx="42" cy="78" r="2" fill="#7a0a10"/><circle cx="66" cy="76" r="2" fill="#7a0a10"/><rect x="-5" y="86" width="110" height="20" fill="#b4281a"/></g></svg></div></div>
<div class="nm" style="left:1294.95px;top:386px;letter-spacing:-0.227px"><span class="nt" id="n6"><svg class="sy" width="12" height="12" viewBox="0 0 12 12"><path d="M0.8 9.5H5.6M2.6 4.3L5.9 7.1M8.5 1V5.6" stroke="#0f6cbd" stroke-width="1.5" fill="none" stroke-linecap="round"/></svg>images (3).jpeg</span></div>
<div class="dt" style="left:1295px;top:406px;letter-spacing:-0.273px"><span id="d6">Yesterday at 13:05:01</span></div>
<div class="card" style="left:1555.0px;top:275px;width:148px;height:100px"><div style="position:absolute;left:2px;top:2px;width:144px;height:96px;overflow:hidden;border-radius:2px"><svg width="144" height="96" viewBox="0 0 144 96" style="position:absolute;left:0;top:0"><defs><filter id="b7" x="-10%" y="-10%" width="120%" height="120%"><feGaussianBlur stdDeviation="1.5"/></filter></defs><g filter="url(#b7)"><rect x="-5" y="-5" width="160" height="110" fill="#3e4c30"/><ellipse cx="20" cy="18" rx="24" ry="18" fill="#5a7048"/><circle cx="14" cy="6" r="4" fill="#d8a0a8"/><circle cx="16" cy="12" r="4" fill="#d8a0a8"/><circle cx="30" cy="10" r="4" fill="#d8a0a8"/><circle cx="50" cy="14" r="4" fill="#d8a0a8"/><circle cx="4" cy="34" r="4" fill="#d8a0a8"/><circle cx="8" cy="40" r="4" fill="#d8a0a8"/><circle cx="50" cy="4" r="4" fill="#d83a48"/><circle cx="88" cy="4" r="5" fill="#d83a48"/><circle cx="100" cy="12" r="4" fill="#d83a48"/><circle cx="108" cy="8" r="5" fill="#d83a48"/><circle cx="120" cy="10" r="5" fill="#d83a48"/><circle cx="138" cy="12" r="5" fill="#d83a48"/><circle cx="96" cy="22" r="4" fill="#d83a48"/><ellipse cx="102" cy="30" rx="16" ry="10" fill="#6a8a40"/><rect x="40" y="-5" width="4" height="30" fill="#6a706a"/><rect x="71" y="-5" width="5" height="30" fill="#6a706a"/><rect x="22" y="24" width="70" height="26" fill="#6e766e"/><rect x="28" y="50" width="68" height="8" fill="#8a948a"/><rect x="92" y="37" width="18" height="4" fill="#707870"/><rect x="26" y="27" width="2" height="22" fill="#50564e"/><rect x="32" y="27" width="2" height="22" fill="#50564e"/><rect x="38" y="27" width="2" height="22" fill="#50564e"/><rect x="44" y="27" width="2" height="22" fill="#50564e"/><rect x="50" y="27" width="2" height="22" fill="#50564e"/><rect x="56" y="27" width="2" height="22" fill="#50564e"/><rect x="62" y="27" width="2" height="22" fill="#50564e"/><rect x="68" y="27" width="2" height="22" fill="#50564e"/><rect x="74" y="27" width="2" height="22" fill="#50564e"/><rect x="80" y="27" width="2" height="22" fill="#50564e"/><rect x="86" y="27" width="2" height="22" fill="#50564e"/><circle cx="20" cy="44" r="6" fill="#de3c42"/><circle cx="34" cy="56" r="7" fill="#de3c42"/><circle cx="12" cy="72" r="6" fill="#de3c42"/><circle cx="45" cy="66" r="6" fill="#de3c42"/><circle cx="62" cy="60" r="6" fill="#de3c42"/><circle cx="84" cy="48" r="6" fill="#de3c42"/><circle cx="100" cy="50" r="6" fill="#de3c42"/><circle cx="118" cy="52" r="7" fill="#de3c42"/><circle cx="138" cy="46" r="6" fill="#de3c42"/><circle cx="124" cy="56" r="7" fill="#de3c42"/><circle cx="140" cy="62" r="7" fill="#de3c42"/><circle cx="122" cy="74" r="8" fill="#de3c42"/><circle cx="100" cy="70" r="8" fill="#de3c42"/><circle cx="78" cy="74" r="8" fill="#de3c42"/><circle cx="60" cy="74" r="7" fill="#de3c42"/><circle cx="40" cy="80" r="7" fill="#de3c42"/><circle cx="20" cy="86" r="7" fill="#de3c42"/><circle cx="6" cy="92" r="6" fill="#de3c42"/><circle cx="138" cy="86" r="8" fill="#de3c42"/><circle cx="112" cy="90" r="6" fill="#de3c42"/><circle cx="85" cy="90" r="6" fill="#de3c42"/><circle cx="6" cy="56" r="5" fill="#de3c42"/><circle cx="56" cy="92" r="5" fill="#de3c42"/><circle cx="30" cy="94" r="6" fill="#de3c42"/><circle cx="70" cy="90" r="6" fill="#de3c42"/><circle cx="100" cy="94" r="6" fill="#de3c42"/><circle cx="128" cy="96" r="6" fill="#de3c42"/><circle cx="136" cy="30" r="6" fill="#de3c42"/><circle cx="10" cy="62" r="5" fill="#de3c42"/><circle cx="28" cy="70" r="6" fill="#de3c42"/><circle cx="50" cy="86" r="6" fill="#de3c42"/><circle cx="90" cy="62" r="6" fill="#de3c42"/><circle cx="110" cy="80" r="6" fill="#de3c42"/><circle cx="130" cy="66" r="6" fill="#de3c42"/><circle cx="70" cy="62" r="5" fill="#de3c42"/><circle cx="46" cy="58" r="3" fill="#e88a90"/><circle cx="76" cy="68" r="3" fill="#e88a90"/><circle cx="96" cy="76" r="3" fill="#e88a90"/><circle cx="118" cy="64" r="3" fill="#e88a90"/><circle cx="130" cy="84" r="3" fill="#e88a90"/></g></svg></div></div>
<div class="nm" style="left:1475.2px;top:386px;letter-spacing:-0.686px"><span class="nt" id="n7"><svg class="sy" width="12" height="12" viewBox="0 0 12 12"><path d="M0.8 9.5H5.6M2.6 4.3L5.9 7.1M8.5 1V5.6" stroke="#0f6cbd" stroke-width="1.5" fill="none" stroke-linecap="round"/></svg>360_F_191678359_J91e...</span></div>
<div class="dt" style="left:1479px;top:406px;letter-spacing:-0.273px"><span id="d7">Yesterday at 13:05:03</span></div>
<div class="card" style="left:267.0px;top:454px;width:148px;height:100px"><div style="position:absolute;left:2px;top:2px;width:144px;height:96px;overflow:hidden;border-radius:2px"><svg width="144" height="96" viewBox="0 0 144 96" style="position:absolute;left:0;top:0"><defs><filter id="b8" x="-10%" y="-10%" width="120%" height="120%"><feGaussianBlur stdDeviation="1.8"/></filter></defs><g filter="url(#b8)"><rect x="-5" y="-5" width="160" height="110" fill="#cc1238"/><circle cx="10" cy="10" r="8" fill="#dc1e48"/><circle cx="35" cy="12" r="8" fill="#dc1e48"/><circle cx="62" cy="8" r="8" fill="#dc1e48"/><circle cx="90" cy="12" r="8" fill="#dc1e48"/><circle cx="118" cy="10" r="8" fill="#dc1e48"/><circle cx="140" cy="16" r="8" fill="#dc1e48"/><circle cx="22" cy="34" r="8" fill="#dc1e48"/><circle cx="50" cy="30" r="8" fill="#dc1e48"/><circle cx="78" cy="34" r="8" fill="#dc1e48"/><circle cx="105" cy="36" r="8" fill="#dc1e48"/><circle cx="132" cy="40" r="8" fill="#dc1e48"/><circle cx="10" cy="58" r="8" fill="#dc1e48"/><circle cx="38" cy="56" r="8" fill="#dc1e48"/><circle cx="64" cy="58" r="8" fill="#dc1e48"/><circle cx="92" cy="62" r="8" fill="#dc1e48"/><circle cx="120" cy="60" r="8" fill="#dc1e48"/><circle cx="24" cy="80" r="8" fill="#dc1e48"/><circle cx="52" cy="82" r="8" fill="#dc1e48"/><circle cx="80" cy="84" r="8" fill="#dc1e48"/><circle cx="108" cy="86" r="8" fill="#dc1e48"/><circle cx="136" cy="82" r="8" fill="#dc1e48"/><circle cx="20" cy="22" r="3" fill="#a80c30"/><circle cx="48" cy="44" r="3" fill="#a80c30"/><circle cx="76" cy="20" r="3" fill="#a80c30"/><circle cx="100" cy="48" r="3" fill="#a80c30"/><circle cx="126" cy="26" r="3" fill="#a80c30"/><circle cx="30" cy="68" r="3" fill="#a80c30"/><circle cx="70" cy="70" r="3" fill="#a80c30"/><circle cx="96" cy="74" r="3" fill="#a80c30"/><circle cx="124" cy="72" r="3" fill="#a80c30"/><circle cx="10" cy="92" r="3" fill="#a80c30"/><circle cx="60" cy="94" r="3" fill="#a80c30"/><circle cx="140" cy="95" r="3" fill="#a80c30"/></g></svg></div></div>
<div class="nm" style="left:190.95000000000005px;top:565px;letter-spacing:-0.213px"><span class="nt" id="n8"><svg class="sy" width="12" height="12" viewBox="0 0 12 12"><path d="M0.8 9.5H5.6M2.6 4.3L5.9 7.1M8.5 1V5.6" stroke="#0f6cbd" stroke-width="1.5" fill="none" stroke-linecap="round"/></svg>images (2).jpeg</span></div>
<div class="dt" style="left:191px;top:585px;letter-spacing:-0.273px"><span id="d8">Yesterday at 13:05:03</span></div>
<div class="card" style="left:451.0px;top:454px;width:148px;height:100px"><div style="position:absolute;left:2px;top:2px;width:144px;height:96px;overflow:hidden;border-radius:2px"><svg width="144" height="96" viewBox="0 0 144 96" style="position:absolute;left:0;top:0"><defs><filter id="b9" x="-10%" y="-10%" width="120%" height="120%"><feGaussianBlur stdDeviation="1.6"/></filter></defs><g filter="url(#b9)"><rect x="-5" y="-5" width="160" height="110" fill="#c44a46"/><circle cx="95" cy="20" r="7" fill="#4a4c36"/><circle cx="84" cy="52" r="5" fill="#4a4c36"/><circle cx="95" cy="84" r="8" fill="#4a4c36"/><circle cx="12" cy="90" r="6" fill="#4a4c36"/><circle cx="48" cy="94" r="5" fill="#4a4c36"/><circle cx="124" cy="8" r="5" fill="#4a4c36"/><circle cx="30" cy="38" r="4" fill="#4a4c36"/><circle cx="10" cy="10" r="8" fill="#d8605a"/><circle cx="28" cy="18" r="8" fill="#d8605a"/><circle cx="52" cy="12" r="6" fill="#d8605a"/><circle cx="80" cy="12" r="7" fill="#d8605a"/><circle cx="14" cy="58" r="8" fill="#d8605a"/><circle cx="28" cy="76" r="8" fill="#d8605a"/><circle cx="66" cy="80" r="7" fill="#d8605a"/><circle cx="110" cy="64" r="6" fill="#d8605a"/><circle cx="58" cy="46" r="20" fill="#ec7e6c"/><circle cx="58" cy="42" r="9" fill="#f4a090"/><ellipse cx="128" cy="50" rx="22" ry="36" fill="#de5444"/></g></svg></div></div>
<div class="nm" style="left:373.20000000000005px;top:565px;letter-spacing:0.009px"><span class="nt" id="n9"><svg class="sy" width="12" height="12" viewBox="0 0 12 12"><path d="M0.8 9.5H5.6M2.6 4.3L5.9 7.1M8.5 1V5.6" stroke="#0f6cbd" stroke-width="1.5" fill="none" stroke-linecap="round"/></svg>istockphoto-501616115...</span></div>
<div class="dt" style="left:375px;top:585px;letter-spacing:-0.273px"><span id="d9">Yesterday at 13:05:04</span></div>
<div class="card" style="left:672.5px;top:454px;width:73px;height:100px"><svg width="73" height="100" viewBox="0 0 73 100" style="position:absolute;left:0;top:0"><g><g opacity="0.6"><rect x="6" y="4.5" width="7" height="1.2" fill="#777"/><rect x="5" y="7" width="62" height="0.6" fill="#c8c8c8"/><rect x="5" y="8.5" width="10" height="0.8" fill="#9a9a9a"/><rect x="5" y="10.3" width="19" height="0.8" fill="#9a9a9a"/><rect x="5" y="12" width="11" height="0.8" fill="#9a9a9a"/><rect x="5" y="13.8" width="6" height="0.8" fill="#c8c8c8"/><rect x="41" y="19" width="9" height="0.8" fill="#9a9a9a"/><rect x="41" y="21" width="13" height="0.8" fill="#9a9a9a"/><rect x="41" y="23" width="12" height="0.8" fill="#9a9a9a"/><rect x="41" y="25" width="11" height="0.8" fill="#9a9a9a"/><rect x="5" y="27.5" width="8" height="0.8" fill="#9a9a9a"/><rect x="5" y="33" width="26" height="1" fill="#888"/><rect x="5" y="36.5" width="7" height="0.8" fill="#9a9a9a"/><rect x="32" y="36.5" width="8" height="0.8" fill="#9a9a9a"/><rect x="5" y="41" width="8" height="0.8" fill="#888"/><rect x="41" y="41" width="7" height="0.8" fill="#9a9a9a"/><rect x="47" y="41" width="10" height="0.8" fill="#9a9a9a"/><rect x="59" y="41" width="6" height="0.8" fill="#9a9a9a"/><rect x="5" y="43.3" width="25" height="0.8" fill="#9a9a9a"/><rect x="48" y="43.3" width="8" height="0.8" fill="#9a9a9a"/><rect x="59" y="43.3" width="6" height="0.8" fill="#9a9a9a"/><rect x="5" y="48" width="15" height="0.8" fill="#9a9a9a"/><rect x="41" y="48" width="13" height="0.8" fill="#9a9a9a"/><rect x="59" y="48" width="6" height="0.8" fill="#9a9a9a"/><rect x="41" y="50.5" width="7" height="0.8" fill="#9a9a9a"/><rect x="5" y="51.5" width="18" height="1" fill="#888"/><rect x="41" y="52.8" width="25" height="0.6" fill="#c8c8c8"/><rect x="59" y="53.5" width="6" height="0.8" fill="#9a9a9a"/><rect x="5" y="87" width="62" height="0.6" fill="#9a9a9a"/><rect x="15" y="88.5" width="42" height="0.8" fill="#9a9a9a"/><rect x="33" y="91.5" width="5" height="0.8" fill="#c8c8c8"/></g></g></svg></div>
<div class="nm" style="left:559.0999999999999px;top:565px;letter-spacing:-0.375px"><span class="nt" id="n10"><svg class="sy" width="12" height="12" viewBox="0 0 12 12"><path d="M0.8 9.5H5.6M2.6 4.3L5.9 7.1M8.5 1V5.6" stroke="#0f6cbd" stroke-width="1.5" fill="none" stroke-linecap="round"/></svg>INV_2023_00025.pdf</span></div>
<div class="dt" style="left:559px;top:585px;letter-spacing:-0.273px"><span id="d10">Yesterday at 15:17:36</span></div>
<div class="card" style="left:856.5px;top:454px;width:73px;height:100px"><svg width="73" height="100" viewBox="0 0 73 100" style="position:absolute;left:0;top:0"><g><g opacity="0.6"><rect x="6" y="4.5" width="7" height="1.2" fill="#777"/><rect x="5" y="7" width="62" height="0.6" fill="#c8c8c8"/><rect x="5" y="8.5" width="10" height="0.8" fill="#9a9a9a"/><rect x="5" y="10.3" width="19" height="0.8" fill="#9a9a9a"/><rect x="5" y="12" width="11" height="0.8" fill="#9a9a9a"/><rect x="5" y="13.8" width="6" height="0.8" fill="#c8c8c8"/><rect x="40" y="18.5" width="9" height="0.8" fill="#9a9a9a"/><rect x="5" y="25" width="26" height="1" fill="#888"/><rect x="5" y="28.5" width="7" height="0.8" fill="#9a9a9a"/><rect x="36" y="28.5" width="6" height="0.8" fill="#9a9a9a"/><rect x="5" y="30.5" width="7" height="0.8" fill="#c8c8c8"/><rect x="36" y="30.5" width="6" height="0.8" fill="#c8c8c8"/><rect x="5" y="33" width="7" height="0.8" fill="#888"/><rect x="36" y="33" width="5" height="0.8" fill="#9a9a9a"/><rect x="45" y="33" width="8" height="0.8" fill="#9a9a9a"/><rect x="61" y="33" width="5" height="0.8" fill="#9a9a9a"/><rect x="5" y="35.5" width="22" height="0.8" fill="#9a9a9a"/><rect x="40" y="35.5" width="6" height="0.8" fill="#9a9a9a"/><rect x="61" y="35.5" width="5" height="0.8" fill="#9a9a9a"/><rect x="42" y="38.5" width="25" height="0.6" fill="#c8c8c8"/><rect x="42" y="40" width="10" height="0.8" fill="#9a9a9a"/><rect x="61" y="40" width="5" height="0.8" fill="#9a9a9a"/><rect x="5" y="41.3" width="22" height="1" fill="#888"/><rect x="42" y="42.3" width="25" height="0.6" fill="#c8c8c8"/><rect x="42" y="43.5" width="6" height="0.8" fill="#9a9a9a"/><rect x="61" y="43.5" width="5" height="0.8" fill="#9a9a9a"/><rect x="48" y="89.5" width="5" height="0.8" fill="#777"/><rect x="57" y="89" width="8" height="0.8" fill="#9a9a9a"/><rect x="57" y="91" width="8" height="0.8" fill="#9a9a9a"/><rect x="5" y="93.5" width="62" height="0.6" fill="#9a9a9a"/><rect x="15" y="94.5" width="42" height="0.8" fill="#9a9a9a"/><rect x="33" y="97.3" width="5" height="0.8" fill="#c8c8c8"/></g></g></svg></div>
<div class="nm" style="left:743.15px;top:565px;letter-spacing:-0.347px"><span class="nt" id="n11"><svg class="sy" width="12" height="12" viewBox="0 0 12 12"><path d="M0.8 9.5H5.6M2.6 4.3L5.9 7.1M8.5 1V5.6" stroke="#0f6cbd" stroke-width="1.5" fill="none" stroke-linecap="round"/></svg>INV_2023_00007 (3).pdf</span></div>
<div class="dt" style="left:743px;top:585px;letter-spacing:-0.055px"><span id="d11">20 hours ago</span></div>
<div class="card" style="left:1014.0px;top:454px;width:126px;height:100px"><svg width="126" height="100" viewBox="0 0 126 100" style="position:absolute;left:0;top:0"><defs><filter id="b12" x="-10%" y="-10%" width="120%" height="120%"><feGaussianBlur stdDeviation="0.25"/></filter></defs><g filter="url(#b12)"><rect x="10" y="5" width="52.7" height="41.7" rx="1" fill="#172f58"/><circle cx="36.4" cy="20.7" r="8.5" fill="none" stroke="#c8905a" stroke-width="1"/><path d="M29 22 L35 15 L44 22Z" fill="#c8905a"/><path d="M28.5 24.5 H44.5 M29 26.5 H44 M30 28.5 H43" stroke="#c8905a" stroke-width="0.8"/><rect x="24" y="33.5" width="25" height="1.3" fill="#b08050"/><rect x="30" y="37" width="13" height="1" fill="#b08050"/><rect x="71.8" y="8.6" width="45.3" height="35.2" fill="#efe6cc"/><circle cx="94" cy="17" r="5" fill="#fff" stroke="#4a2a1a" stroke-width="0.8"/><rect x="89" y="18" width="9" height="9" rx="1" fill="#5a3020"/><rect x="80" y="31.5" width="29" height="1.6" fill="#4a2a1a"/><rect x="86" y="34.5" width="15" height="1" fill="#4a2a1a"/><rect x="7.3" y="56.8" width="45.3" height="34.6" fill="#cdeef1"/><circle cx="30" cy="70.6" r="8" fill="#9fcad0"/><path d="M22 72 L27 67 L32 72 L36 68 L38 73 A8 8 0 0 1 22 73Z" fill="#b0603a"/><circle cx="34" cy="66" r="1.2" fill="#e8c040"/><rect x="14" y="80.5" width="30" height="1.6" fill="#9a4a2a"/><rect x="20" y="83" width="18" height="0.9" fill="#9a4a2a"/><rect x="63" y="54" width="52.7" height="41.7" fill="#3a0f45"/><path d="M84 64 L92 66 L95 74 L100 68 L98 78 L90 80 L85 74Z" fill="#e8803a"/><path d="M86 70 L90 76 L88 78Z" fill="#fff"/><rect x="73" y="81.5" width="33" height="1.6" fill="#e88a3a"/><rect x="80" y="84.5" width="18" height="1" fill="#e88a3a"/></g></svg></div>
<div class="nm" style="left:926.6500000000001px;top:565px;letter-spacing:0.059px"><span class="nt" id="n12"><svg class="sy" width="12" height="12" viewBox="0 0 12 12"><path d="M0.8 9.5H5.6M2.6 4.3L5.9 7.1M8.5 1V5.6" stroke="#0f6cbd" stroke-width="1.5" fill="none" stroke-linecap="round"/></svg>download.png</span></div>
<div class="dt" style="left:927px;top:585px;letter-spacing:-0.273px"><span id="d12">Yesterday at 10:20:19</span></div>
<div class="card" style="left:1211.0px;top:454px;width:100px;height:100px"><svg width="100" height="100" viewBox="0 0 100 100" style="position:absolute;left:0;top:0"><g><g transform="translate(40,49) rotate(-45)"><path d="M-20 -11 H13 L20 -5 V5 L13 11 H-20 A2 2 0 0 1 -22 9 V-9 A2 2 0 0 1 -20 -11Z" fill="#5a6ebe"/><circle cx="12" cy="0" r="3.5" fill="#fff"/><text x="-4" y="4" font-family="Liberation Sans" font-weight="700" font-size="9.5" fill="#fff" text-anchor="middle">SALE</text></g><path d="M57 36 H73 L78 43 V75 A2 2 0 0 1 76 77 H55 A2 2 0 0 1 53 75 V43Z" fill="#0f8fb0"/><rect x="53" y="51" width="25" height="3" fill="#0d7a96"/><circle cx="65.4" cy="44" r="3.5" fill="#fff"/><text x="65.5" y="71" font-family="Liberation Sans" font-size="12" fill="#fff" text-anchor="middle">%</text><path d="M55 40 C58 30 64 26 66 30 C68 34 64 40 65 42 M58 40 C62 28 70 26 70 32 C70 38 66 40 66 42" stroke="#b8b8e8" stroke-width="0.8" fill="none"/></g></svg></div>
<div class="nm" style="left:1110.6px;top:565px;letter-spacing:0.052px"><span class="nt" id="n13"><svg class="sy" width="12" height="12" viewBox="0 0 12 12"><path d="M0.8 9.5H5.6M2.6 4.3L5.9 7.1M8.5 1V5.6" stroke="#0f6cbd" stroke-width="1.5" fill="none" stroke-linecap="round"/></svg>v17-icon.png</span></div>
<div class="dt" style="left:1111px;top:585px;letter-spacing:-0.055px"><span id="d13">23 hours ago</span></div>
<div class="card" style="left:1371.0px;top:474px;width:148px;height:80px"><div style="position:absolute;left:2px;top:2px;width:144px;height:76px;overflow:hidden;border-radius:2px"><svg width="144" height="76" viewBox="0 0 144 76" style="position:absolute;left:0;top:0"><defs><filter id="b14" x="-10%" y="-10%" width="120%" height="120%"><feGaussianBlur stdDeviation="0.3"/></filter></defs><g filter="url(#b14)"><rect width="144" height="76" fill="#fdfdfe"/><rect width="144" height="3.2" fill="#0f6cbd"/><rect x="41" y="0.6" width="62" height="2" fill="#8ab8e8"/><rect x="1" y="6.5" width="12" height="1" fill="#555"/><rect x="1" y="11" width="16" height="1.5" fill="#ddd"/><rect x="1" y="15" width="18" height="0.8" fill="#bbb"/><rect x="1" y="17.5" width="14" height="0.8" fill="#bbb"/><rect x="1" y="20" width="16" height="0.8" fill="#bbb"/><rect x="1" y="23" width="10" height="0.8" fill="#999"/><rect x="1" y="26" width="18" height="0.8" fill="#bbb"/><rect x="1" y="28.5" width="16" height="0.8" fill="#bbb"/><rect x="1" y="31" width="16" height="0.8" fill="#bbb"/><rect x="1" y="34" width="14" height="0.8" fill="#bbb"/><rect x="1" y="37" width="14" height="0.8" fill="#bbb"/><rect x="1" y="40" width="12" height="0.8" fill="#bbb"/><rect x="1" y="43" width="12" height="0.8" fill="#bbb"/><rect x="1" y="46" width="16" height="0.8" fill="#bbb"/><rect x="1" y="49" width="14" height="0.8" fill="#bbb"/><rect x="1" y="52" width="14" height="0.8" fill="#bbb"/><rect x="23" y="10.5" width="15" height="0.8" fill="#bbb"/><rect x="22" y="13.5" width="118" height="3" fill="#e6edf8"/><rect x="24" y="17.5" width="8" height="0.8" fill="#999"/><rect x="24" y="20" width="25" height="0.8" fill="#aaa"/><rect x="24" y="22" width="20" height="0.8" fill="#aaa"/><rect x="24" y="24" width="20" height="0.8" fill="#aaa"/><rect x="24" y="26.5" width="12" height="0.8" fill="#aaa"/><rect x="84" y="20" width="16" height="0.8" fill="#9ab"/><rect x="84" y="22" width="16" height="0.8" fill="#9ab"/><rect x="84" y="24" width="16" height="0.8" fill="#9ab"/><rect x="24" y="29" width="120" height="3" fill="#e4ecf8"/><rect x="24" y="33.5" width="90" height="2" fill="#fbf4dc"/><rect x="24" y="38" width="14" height="1" fill="#aaa"/><rect x="58" y="42.5" width="54" height="1.2" fill="#444"/><rect x="46" y="45" width="80" height="0.8" fill="#bbb"/><rect x="64" y="50" width="22" height="8" fill="#8aa0c0"/><rect x="96" y="50" width="8" height="8" fill="#8ab0d0"/><rect x="64" y="62" width="16" height="1" fill="#999"/><rect x="92" y="62" width="16" height="1" fill="#999"/><rect x="64" y="64" width="22" height="0.8" fill="#ccc"/><rect x="92" y="64" width="22" height="0.8" fill="#ccc"/><rect x="64" y="72.5" width="13" height="0.8" fill="#0f6cbd"/><rect x="92" y="72.5" width="14" height="0.8" fill="#0f6cbd"/><rect x="140" y="18" width="0.6" height="54" fill="#bbb"/></g></svg></div></div>
<div class="nm" style="left:1295.05px;top:565px;letter-spacing:-0.089px"><span class="nt" id="n14"><svg class="sy" width="12" height="12" viewBox="0 0 12 12"><path d="M0.8 9.5H5.6M2.6 4.3L5.9 7.1M8.5 1V5.6" stroke="#0f6cbd" stroke-width="1.5" fill="none" stroke-linecap="round"/></svg>mic2.png</span></div>
<div class="dt" style="left:1295px;top:585px;letter-spacing:-0.055px"><span id="d14">22 hours ago</span></div>
<div class="card" style="left:1555.0px;top:470px;width:148px;height:84px"><div style="position:absolute;left:2px;top:2px;width:144px;height:80px;overflow:hidden;border-radius:2px"><svg width="144" height="80" viewBox="0 0 144 80" style="position:absolute;left:0;top:0"><defs><filter id="b15" x="-10%" y="-10%" width="120%" height="120%"><feGaussianBlur stdDeviation="0.35"/></filter></defs><g filter="url(#b15)"><rect width="144" height="80" fill="#2b2b2b"/><rect width="144" height="3" fill="#1c1c1c"/><rect x="0" y="3" width="144" height="4" fill="#333537"/><rect x="0" y="0" width="5.2" height="80" fill="#2a2438"/><circle cx="2.6" cy="5" r="1.6" fill="#8a9ac8"/><circle cx="2.6" cy="10" r="1.6" fill="#8a9ac8"/><circle cx="2.6" cy="15" r="1.6" fill="#8a9ac8"/><circle cx="2.6" cy="20" r="1.6" fill="#8a9ac8"/><circle cx="2.6" cy="25" r="1.6" fill="#8a9ac8"/><circle cx="2.6" cy="30" r="1.6" fill="#8a9ac8"/><circle cx="2.6" cy="35" r="1.6" fill="#8a9ac8"/><circle cx="2.6" cy="40" r="1.6" fill="#8a9ac8"/><circle cx="2.6" cy="45" r="1.6" fill="#8a9ac8"/><circle cx="2.6" cy="50" r="1.6" fill="#8a9ac8"/><circle cx="2.6" cy="55" r="1.6" fill="#8a9ac8"/><circle cx="2.6" cy="60" r="1.6" fill="#8a9ac8"/><circle cx="2.6" cy="66" r="1.6" fill="#8a9ac8"/><circle cx="2.6" cy="72" r="1.6" fill="#8a9ac8"/><rect x="5.2" y="7" width="39" height="55" fill="#3c3f41"/><rect x="7" y="37" width="30" height="1.6" fill="#2f4a68"/><rect x="12" y="12" width="12" height="0.6" fill="#8a8"/><rect x="14" y="16" width="14" height="0.6" fill="#999"/><rect x="14" y="19" width="14" height="0.6" fill="#999"/><rect x="14" y="22" width="12" height="0.6" fill="#999"/><rect x="16" y="26" width="10" height="0.6" fill="#999"/><rect x="14" y="30" width="14" height="0.6" fill="#999"/><rect x="14" y="34" width="12" height="0.6" fill="#999"/><rect x="14" y="42" width="14" height="0.6" fill="#8a8"/><rect x="14" y="46" width="12" height="0.6" fill="#999"/><rect x="14" y="50" width="12" height="0.6" fill="#999"/><rect x="48" y="12" width="30" height="0.6" fill="#998866"/><rect x="50" y="15" width="28" height="0.6" fill="#888"/><rect x="52" y="18" width="32" height="0.6" fill="#888"/><rect x="54" y="21" width="30" height="0.6" fill="#888"/><rect x="48" y="27" width="40" height="0.6" fill="#998866"/><rect x="50" y="30" width="36" height="0.6" fill="#888"/><rect x="50" y="34" width="40" height="0.6" fill="#888"/><rect x="50" y="38" width="42" height="0.6" fill="#888"/><rect x="50" y="42" width="42" height="0.6" fill="#888"/><rect x="50" y="46" width="42" height="0.6" fill="#888"/><rect x="50" y="50" width="42" height="0.6" fill="#888"/><rect x="5" y="62" width="139" height="0.8" fill="#606060"/><rect x="8" y="77" width="60" height="0.6" fill="#777"/></g></svg></div></div>
<div class="nm" style="left:1478.2px;top:565px;letter-spacing:-0.171px"><span class="nt" id="n15"><svg class="sy" width="12" height="12" viewBox="0 0 12 12"><path d="M0.8 9.5H5.6M2.6 4.3L5.9 7.1M8.5 1V5.6" stroke="#0f6cbd" stroke-width="1.5" fill="none" stroke-linecap="round"/></svg>Screenshot from 2023-1...</span></div>
<div class="dt" style="left:1479px;top:585px;letter-spacing:-0.055px"><span id="d15">20 hours ago</span></div>
<div class="card" style="left:267.0px;top:654px;width:148px;height:79px"><div style="position:absolute;left:2px;top:2px;width:144px;height:75px;overflow:hidden;border-radius:2px"><svg width="144" height="75" viewBox="0 0 144 75" style="position:absolute;left:0;top:0"><defs><filter id="b16" x="-10%" y="-10%" width="120%" height="120%"><feGaussianBlur stdDeviation="0.35"/></filter></defs><g filter="url(#b16)"><rect width="144" height="75" fill="#f6f7f9"/><rect x="2" y="6" width="89" height="26" fill="#ffffff"/><rect width="144" height="5.5" fill="#fdfdfd"/><rect x="2" y="2.5" width="8" height="0.8" fill="#c05060"/><rect x="11" y="2.5" width="8" height="0.6" fill="#aaa"/><rect x="20" y="2.5" width="6" height="0.6" fill="#aaa"/><rect x="28" y="2.5" width="6" height="0.6" fill="#aaa"/><rect x="36" y="2.5" width="6" height="0.6" fill="#aaa"/><rect x="44" y="2.5" width="8" height="0.6" fill="#aaa"/><rect x="126" y="2" width="6" height="1" fill="#c05060"/><rect x="133" y="2.5" width="10" height="0.6" fill="#c08090"/><rect x="2" y="7" width="8" height="1" fill="#aaa"/><rect x="66" y="8" width="6" height="1" fill="#888"/><rect x="74" y="8" width="6" height="1" fill="#888"/><rect x="82" y="8" width="6" height="1" fill="#c0a0a0"/><rect x="64" y="12.5" width="26" height="1.5" fill="#e2e4e8"/><rect x="96" y="12" width="8" height="2" fill="#7a5070"/><rect x="106" y="12.5" width="6" height="1" fill="#999"/><rect x="114" y="12.5" width="6" height="1" fill="#999"/><rect x="136" y="12.5" width="6" height="1" fill="#999"/><rect x="3" y="16.5" width="13" height="1.8" fill="#444"/><rect x="3" y="20.5" width="6" height="0.7" fill="#bbb"/><rect x="12" y="20.5" width="8" height="0.7" fill="#aac"/><rect x="3" y="23.5" width="6" height="0.7" fill="#bbb"/><rect x="12" y="23.5" width="8" height="0.7" fill="#aac"/><rect x="3" y="26" width="6" height="0.7" fill="#dcb"/><rect x="12" y="26" width="8" height="0.7" fill="#aac"/><rect x="3" y="28.8" width="6" height="0.7" fill="#bbb"/><rect x="12" y="28.8" width="10" height="0.7" fill="#aac"/><rect x="96" y="20" width="10" height="2" fill="#666"/><rect x="96" y="25" width="10" height="2" fill="#666"/><rect x="2" y="32" width="0.5" height="43" fill="#d0d0d0"/><rect x="6" y="32" width="0.5" height="43" fill="#e0e0e0"/></g></svg></div></div>
<div class="nm" style="left:190.89999999999998px;top:744px;letter-spacing:-0.183px"><span class="nt" id="n16"><svg class="sy" width="12" height="12" viewBox="0 0 12 12"><path d="M0.8 9.5H5.6M2.6 4.3L5.9 7.1M8.5 1V5.6" stroke="#0f6cbd" stroke-width="1.5" fill="none" stroke-linecap="round"/></svg>5 (1).png</span></div>
<div class="dt" style="left:191px;top:764px;letter-spacing:-0.055px"><span id="d16">20 hours ago</span></div>
<div class="card" style="left:475.0px;top:633px;width:100px;height:100px"><svg width="100" height="100" viewBox="0 0 100 100" style="position:absolute;left:0;top:0"><defs><filter id="b17" x="-10%" y="-10%" width="120%" height="120%"><feGaussianBlur stdDeviation="0.5"/></filter></defs><g filter="url(#b17)"><path d="M28 14 L36 6 L51 4 L66 12 L74 16 L72 40 L70 75 L66 94 L28 92 L25 60 L24 40Z" fill="#6aa4d8"/><path d="M26 16 L17 23 L14 70 L26 71 L27 40Z" fill="#5c98cf"/><path d="M72 16 L80 28 L85 67 L82 76 L72 74 L70 40Z" fill="#5c98cf"/><path d="M14 64 L26 65 L26 71 L15 72Z" fill="#c48c96"/><path d="M72 70 L84 68 L82 76 L72 75Z" fill="#c48c96"/><path d="M36 6 L51 4 L53 9 L40 11Z" fill="#c89098"/><rect x="48" y="29" width="13" height="2" fill="#8a5a4a"/><path d="M45 13 V93" stroke="#3a5a80" stroke-width="0.6"/><circle cx="45" cy="22" r="0.7" fill="#223355"/><circle cx="45" cy="34" r="0.7" fill="#223355"/><circle cx="45" cy="46" r="0.7" fill="#223355"/><circle cx="45" cy="58" r="0.7" fill="#223355"/><circle cx="45" cy="70" r="0.7" fill="#223355"/><circle cx="45" cy="82" r="0.7" fill="#223355"/></g></svg></div>
<div class="nm" style="left:375.15px;top:744px;letter-spacing:-0.035px"><span class="nt" id="n17"><svg class="sy" width="12" height="12" viewBox="0 0 12 12"><path d="M0.8 9.5H5.6M2.6 4.3L5.9 7.1M8.5 1V5.6" stroke="#0f6cbd" stroke-width="1.5" fill="none" stroke-linecap="round"/></svg>download (2).jpeg</span></div>
<div class="dt" style="left:375px;top:764px;letter-spacing:-0.055px"><span id="d17">20 hours ago</span></div>
<div class="card" style="left:659.0px;top:633px;width:100px;height:100px"><svg width="100" height="100" viewBox="0 0 100 100" style="position:absolute;left:0;top:0"><g><circle cx="36.7" cy="48" r="19.5" stroke="#000" stroke-width="5.5" fill="none"/><path d="M36.7 9.5V18.5 M3.5 29 L11 33.3 M3.5 67 L11 62.8 M62 33.3 L69.5 29" stroke="#000" stroke-width="5.5" stroke-linecap="round"/><circle cx="37.5" cy="76.5" r="17.8" fill="#fff"/><circle cx="56.4" cy="60.5" r="22.8" fill="#fff"/><circle cx="78" cy="72" r="22.3" fill="#fff"/><rect x="37.5" y="60.5" width="40.5" height="33.8" fill="#fff"/><circle cx="37.5" cy="76.5" r="14.75" fill="#000"/><circle cx="56.4" cy="60.5" r="19.75" fill="#000"/><circle cx="78" cy="72" r="19.25" fill="#000"/><rect x="37.5" y="60.5" width="40.5" height="30.75" fill="#000"/><circle cx="37.5" cy="76.5" r="9.25" fill="#fff"/><circle cx="56.4" cy="60.5" r="14.25" fill="#fff"/><circle cx="78" cy="72" r="13.75" fill="#fff"/><rect x="37.5" y="60.5" width="40.5" height="25.25" fill="#fff"/></g></svg></div>
<div class="nm" style="left:558.65px;top:744px;letter-spacing:0.001px"><span class="nt" id="n18"><svg class="sy" width="12" height="12" viewBox="0 0 12 12"><path d="M0.8 9.5H5.6M2.6 4.3L5.9 7.1M8.5 1V5.6" stroke="#0f6cbd" stroke-width="1.5" fill="none" stroke-linecap="round"/></svg>cloudy.png</span></div>
<div class="dt" style="left:559px;top:764px;letter-spacing:-0.055px"><span id="d18">20 hours ago</span></div>
<div class="card" style="left:843.0px;top:633px;width:100px;height:100px"><svg width="100" height="100" viewBox="0 0 100 100" style="position:absolute;left:0;top:0"><g><path d="M36.5 23 H66 L77.5 34.5 V76 A1.5 1.5 0 0 1 76 77.5 H36.5 A1.5 1.5 0 0 1 35 76 V24.5 A1.5 1.5 0 0 1 36.5 23Z" stroke="#8a8886" stroke-width="1.3" fill="#fff"/><path d="M65.5 23 V33 A2 2 0 0 0 67.5 35 H77.5" stroke="#8a8886" stroke-width="1.3" fill="none"/><rect x="22" y="40.3" width="28" height="28" rx="2" fill="#107c41"/><text x="36" y="61" font-family="Liberation Sans" font-size="19" fill="#fff" text-anchor="middle">X</text><rect x="52.2" y="44" width="8" height="3.6" rx="1.6" fill="#21a366"/><rect x="62" y="44" width="8" height="3.6" rx="1.6" fill="#33c481"/><rect x="52.2" y="52" width="8" height="3.6" rx="1.6" fill="#107c41"/><rect x="62" y="52" width="8" height="3.6" rx="1.6" fill="#21a366"/><rect x="52.2" y="60" width="8" height="3.6" rx="1.6" fill="#185c37"/><rect x="62" y="60" width="8" height="3.6" rx="1.6" fill="#0f3f24"/></g></svg></div>
<div class="nm" style="left:743.0px;top:744px;letter-spacing:-0.406px"><span class="nt" id="n19"><svg class="sy" width="12" height="12" viewBox="0 0 12 12"><path d="M0.8 9.5H5.6M2.6 4.3L5.9 7.1M8.5 1V5.6" stroke="#0f6cbd" stroke-width="1.5" fill="none" stroke-linecap="round"/></svg>Excel Report (23).xlsx</span></div>
<div class="dt" style="left:743px;top:764px;letter-spacing:-0.055px"><span id="d19">19 hours ago</span></div>
<div class="card" style="left:1038.0px;top:633px;width:78px;height:100px"><svg width="78" height="100" viewBox="0 0 78 100" style="position:absolute;left:0;top:0"><g><rect x="5.5" y="6" width="35" height="0.8" fill="#888"/></g></svg></div>
<div class="nm" style="left:926.8499999999999px;top:744px;letter-spacing:-0.632px"><span class="nt" id="n20"><svg class="sy" width="12" height="12" viewBox="0 0 12 12"><path d="M0.8 9.5H5.6M2.6 4.3L5.9 7.1M8.5 1V5.6" stroke="#0f6cbd" stroke-width="1.5" fill="none" stroke-linecap="round"/></svg>API_KEY (1).txt</span></div>
<div class="dt" style="left:927px;top:764px;letter-spacing:-0.055px"><span id="d20">19 hours ago</span></div>
<div class="card" style="left:1211.0px;top:633px;width:100px;height:100px"><svg width="100" height="100" viewBox="0 0 100 100" style="position:absolute;left:0;top:0"><g><path d="M22 31.5 A1.5 1.5 0 0 1 23.5 30 H44 L48 34 V38 H22Z" fill="#ffb900"/><path d="M22 38.5 H44 L48 34 H76.2 A1.5 1.5 0 0 1 77.7 35.5 V69 A1.5 1.5 0 0 1 76.2 70.5 H23.5 A1.5 1.5 0 0 1 22 69Z" fill="#ffd965"/><rect x="22" y="69.3" width="55.7" height="1.2" fill="#c55a11"/><rect x="22" y="50.5" width="1.6" height="8.8" fill="#c4581a"/><rect x="24.4" y="50.5" width="21" height="8.8" rx="1" fill="#c4581a"/><rect x="38" y="52.5" width="5.5" height="5" fill="#ffd965"/><rect x="47.5" y="51.5" width="1.4" height="7" fill="#c4581a"/><rect x="50.6" y="51.5" width="1.4" height="7" fill="#c4581a"/><rect x="53.7" y="51.5" width="1.4" height="7" fill="#c4581a"/><rect x="56.8" y="51.5" width="1.4" height="7" fill="#c4581a"/><rect x="59.9" y="51.5" width="1.4" height="7" fill="#c4581a"/><rect x="63.0" y="51.5" width="1.4" height="7" fill="#c4581a"/><rect x="66.1" y="51.5" width="1.4" height="7" fill="#c4581a"/><rect x="69.2" y="51.5" width="1.4" height="7" fill="#c4581a"/><rect x="72.3" y="51.5" width="1.4" height="7" fill="#c4581a"/><rect x="75.4" y="51.5" width="1.4" height="7" fill="#c4581a"/></g></svg></div>
<div class="nm" style="left:1110.95px;top:744px;letter-spacing:0.064px"><span class="nt" id="n21"><svg class="sy" width="12" height="12" viewBox="0 0 12 12"><path d="M0.8 9.5H5.6M2.6 4.3L5.9 7.1M8.5 1V5.6" stroke="#0f6cbd" stroke-width="1.5" fill="none" stroke-linecap="round"/></svg>pdf report-v17.zip</span></div>
<div class="dt" style="left:1111px;top:764px;letter-spacing:-0.055px"><span id="d21">19 hours ago</span></div>
<div class="card" style="left:1395.0px;top:633px;width:100px;height:100px"><svg width="100" height="100" viewBox="0 0 100 100" style="position:absolute;left:0;top:0"><g><path d="M22 31.5 A1.5 1.5 0 0 1 23.5 30 H44 L48 34 V38 H22Z" fill="#ffb900"/><path d="M22 38.5 H44 L48 34 H76.2 A1.5 1.5 0 0 1 77.7 35.5 V69 A1.5 1.5 0 0 1 76.2 70.5 H23.5 A1.5 1.5 0 0 1 22 69Z" fill="#ffd965"/><rect x="22" y="69.3" width="55.7" height="1.2" fill="#c55a11"/><rect x="22" y="50.5" width="1.6" height="8.8" fill="#c4581a"/><rect x="24.4" y="50.5" width="21" height="8.8" rx="1" fill="#c4581a"/><rect x="38" y="52.5" width="5.5" height="5" fill="#ffd965"/><rect x="47.5" y="51.5" width="1.4" height="7" fill="#c4581a"/><rect x="50.6" y="51.5" width="1.4" height="7" fill="#c4581a"/><rect x="53.7" y="51.5" width="1.4" height="7" fill="#c4581a"/><rect x="56.8" y="51.5" width="1.4" height="7" fill="#c4581a"/><rect x="59.9" y="51.5" width="1.4" height="7" fill="#c4581a"/><rect x="63.0" y="51.5" width="1.4" height="7" fill="#c4581a"/><rect x="66.1" y="51.5" width="1.4" height="7" fill="#c4581a"/><rect x="69.2" y="51.5" width="1.4" height="7" fill="#c4581a"/><rect x="72.3" y="51.5" width="1.4" height="7" fill="#c4581a"/><rect x="75.4" y="51.5" width="1.4" height="7" fill="#c4581a"/></g></svg></div>
<div class="nm" style="left:1292.4px;top:744px;letter-spacing:-0.236px"><span class="nt" id="n22"><svg class="sy" width="12" height="12" viewBox="0 0 12 12"><path d="M0.8 9.5H5.6M2.6 4.3L5.9 7.1M8.5 1V5.6" stroke="#0f6cbd" stroke-width="1.5" fill="none" stroke-linecap="round"/></svg>stock_intercompany_tra...</span></div>
<div class="dt" style="left:1295px;top:764px;letter-spacing:-0.055px"><span id="d22">18 hours ago</span></div>
<div class="card" style="left:1555.0px;top:635px;width:148px;height:98px"><div style="position:absolute;left:2px;top:2px;width:144px;height:94px;overflow:hidden;border-radius:2px"><svg width="144" height="94" viewBox="0 0 144 94" style="position:absolute;left:0;top:0"><defs><filter id="b23" x="-10%" y="-10%" width="120%" height="120%"><feGaussianBlur stdDeviation="0.2"/></filter></defs><g filter="url(#b23)"><rect width="144" height="94" fill="#3b3bd9"/><rect width="144" height="23.5" fill="#eef0f8"/><path d="M13 10 A3 3 0 1 0 13 15 M14 9 A3 3 0 0 1 14 16" stroke="#3b3bd9" stroke-width="1.6" fill="none"/><text x="24" y="14.5" font-family="Liberation Sans" font-weight="700" font-size="6.6" fill="#111" textLength="109" lengthAdjust="spacingAndGlyphs">Best logo sizes for different platforms</text><rect x="8.75" y="36" width="39.1" height="39.1" fill="#fff"/><rect x="52.5" y="36" width="38.8" height="39.1" fill="#fff"/><rect x="95.65" y="36" width="39.1" height="39.1" fill="#fff"/><circle cx="28.8" cy="51.7" r="7" fill="#3b3bd9"/><path d="M25.8 48.7 L31.8 54.7 M31.8 48.7 L25.8 54.7" stroke="#fff" stroke-width="0.7"/><text x="28.8" y="65.5" font-family="Liberation Sans" font-weight="700" font-size="4.2" fill="#222" text-anchor="middle">LOGO</text><circle cx="63.4" cy="55.5" r="5" fill="#3b3bd9"/><path d="M61.4 53.5 L65.4 57.5 M65.4 53.5 L61.4 57.5" stroke="#fff" stroke-width="0.6"/><text x="77.5" y="57" font-family="Liberation Sans" font-weight="700" font-size="4.2" fill="#222" text-anchor="middle">LOGO</text><circle cx="115.2" cy="55.5" r="8" fill="#3b3bd9"/><path d="M111.7 52 L118.7 59 M118.7 52 L111.7 59" stroke="#fff" stroke-width="0.8"/><text x="28.3" y="83.5" font-family="Liberation Sans" font-weight="700" font-size="4.2" fill="#fff" text-anchor="middle">Vertical</text><text x="71.8" y="83.5" font-family="Liberation Sans" font-weight="700" font-size="4.2" fill="#fff" text-anchor="middle">Horizontal</text><text x="115.2" y="83.5" font-family="Liberation Sans" font-weight="700" font-size="4.2" fill="#fff" text-anchor="middle">Icon Only</text></g></svg></div></div>
<div class="nm" style="left:1477.45px;top:744px;letter-spacing:-0.241px"><span class="nt" id="n23"><svg class="sy" width="12" height="12" viewBox="0 0 12 12"><path d="M0.8 9.5H5.6M2.6 4.3L5.9 7.1M8.5 1V5.6" stroke="#0f6cbd" stroke-width="1.5" fill="none" stroke-linecap="round"/></svg>04-07-23_Logo-Size-Gu...</span></div>
<div class="dt" style="left:1479px;top:764px;letter-spacing:-0.108px"><span id="d23">Less than a minute ago</span></div>

<!-- SCROLLBAR -->
<div id="sb" class="a"></div>
<svg class="a" style="left:1827.5px;top:152px" width="10" height="8" viewBox="0 0 10 8"><path d="M1.5 6L5 2L8.5 6Z" fill="#a3a3a3"/></svg>
<svg class="a" style="left:1827px;top:1003px" width="10" height="8" viewBox="0 0 10 8"><path d="M1.5 2H8.5L5 6Z" fill="#a3a3a3"/></svg>
</body></html>
